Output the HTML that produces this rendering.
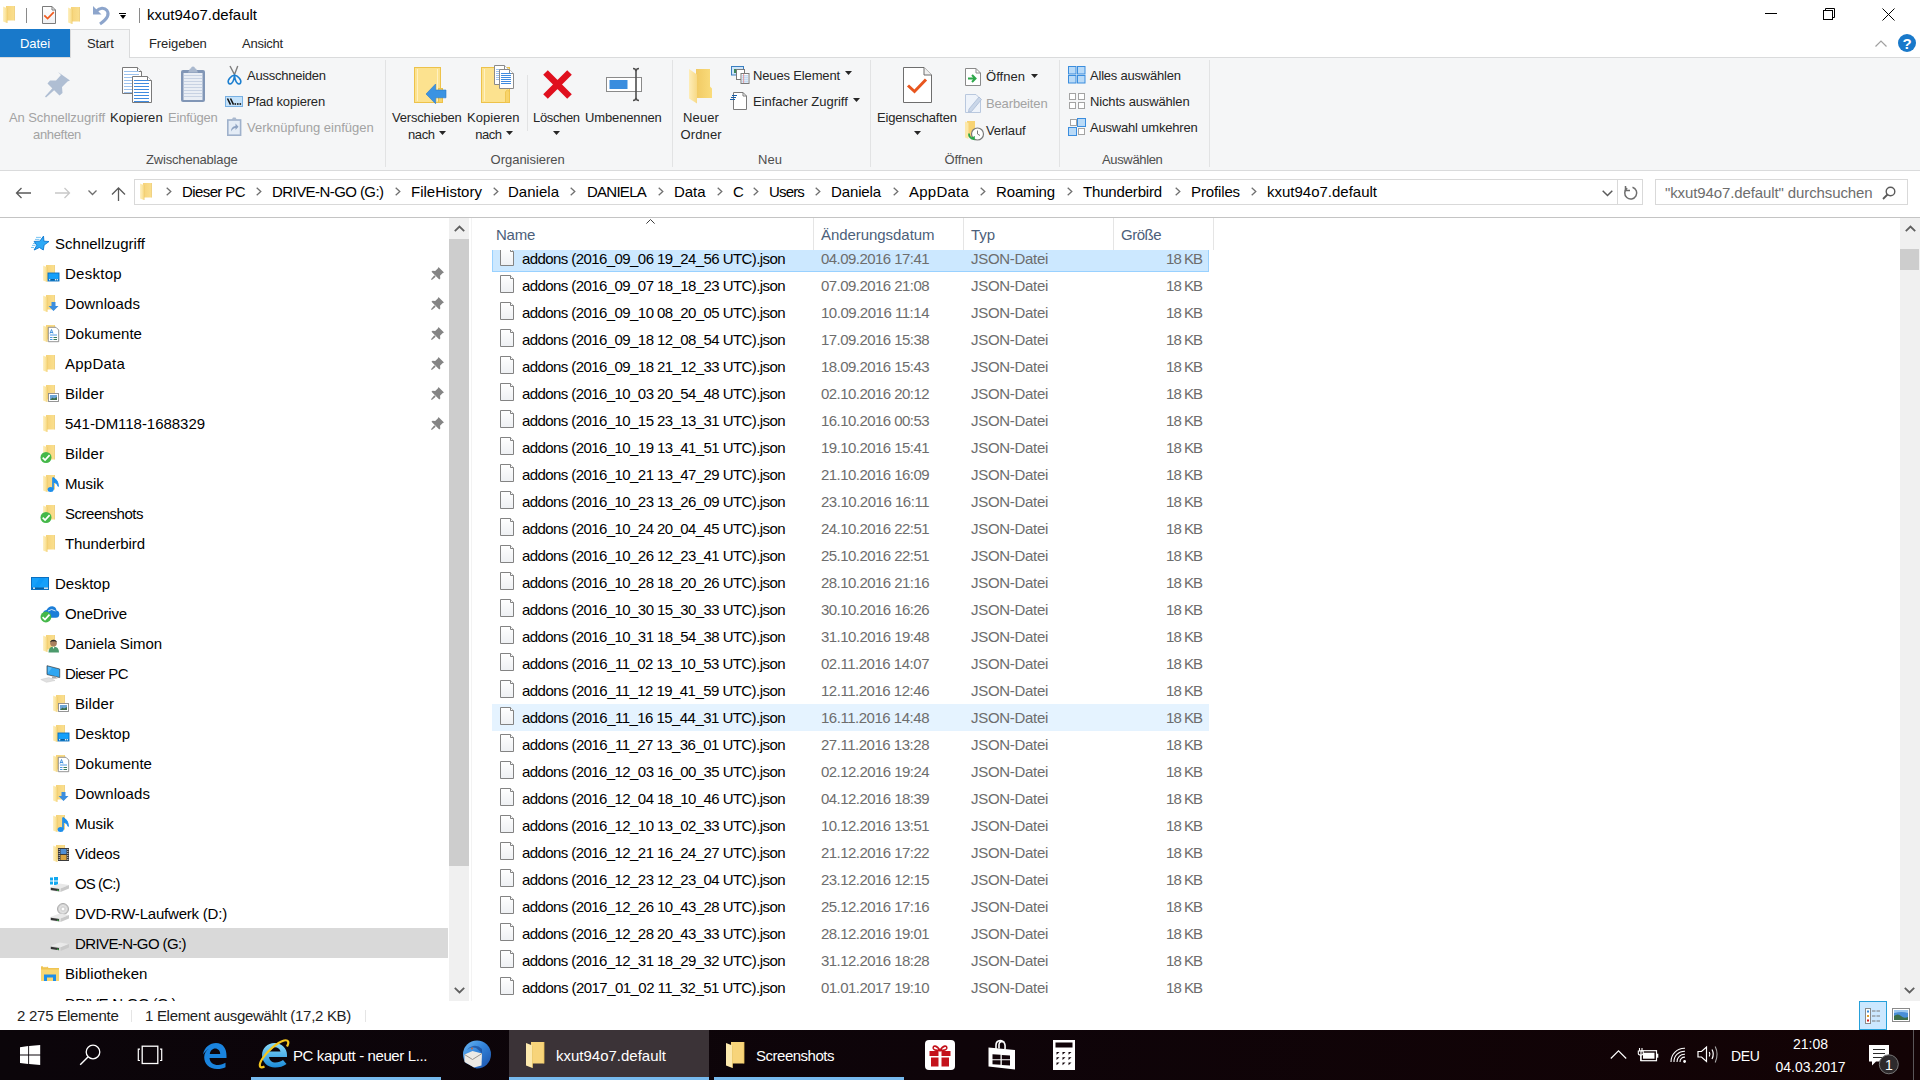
<!DOCTYPE html><html><head><meta charset="utf-8"><style>
html,body{margin:0;padding:0;width:1920px;height:1080px;overflow:hidden;background:#fff;font-family:"Liberation Sans",sans-serif;}
.t{position:absolute;white-space:nowrap;}
.b{position:absolute;}
svg{overflow:visible}
</style></head><body>
<svg width="0" height="0" style="position:absolute"><defs>
<linearGradient id="fold" x1="0" y1="0" x2="1" y2="1"><stop offset="0" stop-color="#FBE39A"/><stop offset="1" stop-color="#F2C75A"/></linearGradient>
<linearGradient id="flap" x1="0" y1="0" x2="1" y2="0"><stop offset="0" stop-color="#FEF0C2"/><stop offset="1" stop-color="#F8DB84"/></linearGradient>
<linearGradient id="fbody" x1="0" y1="0" x2="1" y2="0"><stop offset="0" stop-color="#F6D37A"/><stop offset="1" stop-color="#FADF8E"/></linearGradient>
<linearGradient id="docg" x1="0" y1="0" x2="0" y2="1"><stop offset="0" stop-color="#FFFFFF"/><stop offset="1" stop-color="#EEF0F3"/></linearGradient>
</defs></svg>
<div class="b" style="left:0px;top:0px;width:1920px;height:29px;background:#fff"></div>
<svg class="b" style="left:3px;top:6px;" width="12" height="17" viewBox="0 0 12 17"><g transform="scale(1.0,1.0)"><path d="M3 0H11.5V14.5H3Z" fill="url(#fbody)"/><path d="M11.5 0V14.5" stroke="#E7BE57" stroke-width="0.6"/><path d="M0 0.6L4.2 2.2V17L0 15.4Z" fill="url(#flap)"/><path d="M4.2 2.2V17" stroke="#E9C462" stroke-width="0.5"/></g></svg>
<div class="b" style="left:26px;top:8px;width:1px;height:15px;background:#8A8A8A"></div>
<svg class="b" style="left:42px;top:6px;" width="14" height="18" viewBox="0 0 14 18"><path d="M0.5 0.5H10L13.5 4V17.5H0.5Z" fill="url(#docg)" stroke="#7B7B7B"/><path d="M10 0.5V4H13.5" fill="none" stroke="#7B7B7B"/><path d="M2.3 9.3L5.6 12.5L11.8 6.2" fill="none" stroke="#F05A1E" stroke-width="1.7"/></svg>
<svg class="b" style="left:68px;top:7px;" width="12" height="17" viewBox="0 0 12 17"><g transform="scale(1.0,1.0)"><path d="M3 0H11.5V14.5H3Z" fill="url(#fbody)"/><path d="M11.5 0V14.5" stroke="#E7BE57" stroke-width="0.6"/><path d="M0 0.6L4.2 2.2V17L0 15.4Z" fill="url(#flap)"/><path d="M4.2 2.2V17" stroke="#E9C462" stroke-width="0.5"/></g></svg>
<svg class="b" style="left:93px;top:6px;" width="17" height="19" viewBox="0 0 17 19"><path d="M0 0L0 8.5L8.5 8.5Z" fill="#8DA5CC"/><path d="M3.5 5C6.5 1.5 11.5 1.2 14 4.5C16.5 8 15 12.5 7 18" fill="none" stroke="#8DA5CC" stroke-width="3"/></svg>
<div class="b" style="left:119px;top:13px;width:7px;height:1px;background:#000"></div>
<svg class="b" style="left:120px;top:15px;" width="6" height="4" viewBox="0 0 6 4"><path d="M0 0H6L3 4Z" fill="#000"/></svg>
<div class="b" style="left:139px;top:8px;width:1px;height:15px;background:#8A8A8A"></div>
<div class="t" style="left:147px;top:7.30px;font-size:15px;line-height:15px;color:#000;letter-spacing:-0.006px;">kxut94o7.default</div>
<div class="b" style="left:1765px;top:13px;width:12px;height:1px;background:#000"></div>
<svg class="b" style="left:1823px;top:8px;" width="13" height="13" viewBox="0 0 13 13"><rect x="0.5" y="2.5" width="9" height="9" fill="none" stroke="#000"/><path d="M2.5 2.5V0.5H11.5V9.5H9.5" fill="none" stroke="#000"/></svg>
<svg class="b" style="left:1882px;top:8px;" width="13" height="13" viewBox="0 0 13 13"><path d="M0.5 0.5L12.5 12.5M12.5 0.5L0.5 12.5" stroke="#000" stroke-width="1"/></svg>
<div class="b" style="left:0px;top:29px;width:70px;height:28px;background:#1979CA"></div>
<div class="t" style="left:20px;top:36.50px;font-size:13px;line-height:13px;color:#fff;letter-spacing:-0.072px;">Datei</div>
<div class="b" style="left:70px;top:29px;width:60px;height:29px;background:#F5F6F7;border:1px solid #DADBDC;border-bottom:none;box-sizing:border-box"></div>
<div class="t" style="left:87px;top:36.50px;font-size:13px;line-height:13px;color:#262626;letter-spacing:-0.144px;">Start</div>
<div class="t" style="left:149px;top:36.50px;font-size:13px;line-height:13px;color:#262626;letter-spacing:-0.089px;">Freigeben</div>
<div class="t" style="left:242px;top:36.50px;font-size:13px;line-height:13px;color:#262626;letter-spacing:-0.234px;">Ansicht</div>
<div class="b" style="left:0px;top:57px;width:1920px;height:114px;background:#F5F6F7;border-top:1px solid #DADBDC;border-bottom:1px solid #DADBDC;box-sizing:border-box"></div>
<div class="b" style="left:71px;top:57px;width:58px;height:1px;background:#F5F6F7"></div>
<svg class="b" style="left:1875px;top:40px;" width="12" height="7" viewBox="0 0 12 7"><path d="M0.5 6.5L6 1L11.5 6.5" fill="none" stroke="#A0A0A0" stroke-width="1.2"/></svg>
<svg class="b" style="left:1898px;top:34px;" width="18" height="18" viewBox="0 0 18 18"><circle cx="9" cy="9" r="9" fill="#1979CA"/><text x="9" y="14.5" text-anchor="middle" font-family="Liberation Sans" font-weight="bold" font-size="15" fill="#fff">?</text></svg>
<div class="b" style="left:385px;top:60px;width:1px;height:107px;background:#E2E3E4"></div>
<div class="b" style="left:527px;top:75px;width:1px;height:56px;background:#E2E3E4"></div>
<div class="b" style="left:672px;top:60px;width:1px;height:107px;background:#E2E3E4"></div>
<div class="b" style="left:870px;top:60px;width:1px;height:107px;background:#E2E3E4"></div>
<div class="b" style="left:1059px;top:60px;width:1px;height:107px;background:#E2E3E4"></div>
<div class="b" style="left:1209px;top:60px;width:1px;height:107px;background:#E2E3E4"></div>
<svg class="b" style="left:44px;top:72px;" width="26" height="26" viewBox="0 0 26 26"><g fill="#AFBED3"><path d="M14 0L26 8.5L23.5 9.5L18 15L18.5 21L15.5 23.5L3.5 11.5L6 8.5L12 8.5L17 3Z" transform="translate(0,0)"/><path d="M9.5 15L1 24.5L2 25.5L11.5 17Z"/></g></svg>
<div class="t" style="left:9px;top:110.50px;font-size:13px;line-height:13px;color:#A3A3A3;letter-spacing:-0.078px;">An Schnellzugriff</div>
<div class="t" style="left:33px;top:127.50px;font-size:13px;line-height:13px;color:#A3A3A3;letter-spacing:-0.326px;">anheften</div>
<svg class="b" style="left:122px;top:67px;" width="31" height="36" viewBox="0 0 31 36"><path d="M0.5 0.5H15.5L19.5 4.5V26.5H0.5Z" fill="#fff" stroke="#7A7A7A"/><path d="M15.5 0.5V4.5H19.5" fill="#fff" stroke="#7A7A7A"/><rect x="2" y="4" width="15" height="1" fill="#9CC2EE"/><rect x="2" y="7" width="15" height="1" fill="#9CC2EE"/><rect x="2" y="10" width="15" height="1" fill="#9CC2EE"/><rect x="2" y="13" width="15" height="1" fill="#9CC2EE"/><rect x="2" y="16" width="15" height="1" fill="#9CC2EE"/><rect x="2" y="19" width="15" height="1" fill="#9CC2EE"/><rect x="2" y="22" width="15" height="1" fill="#9CC2EE"/><rect x="2" y="25" width="15" height="1" fill="#9CC2EE"/><path d="M10.5 9.5H25.5L29.5 13.5V35.5H10.5Z" fill="#fff" stroke="#7A7A7A"/><path d="M25.5 9.5V13.5H29.5" fill="#fff" stroke="#7A7A7A"/><rect x="12" y="13" width="15" height="1" fill="#3F8BE0"/><rect x="12" y="16" width="15" height="1" fill="#3F8BE0"/><rect x="12" y="19" width="15" height="1" fill="#3F8BE0"/><rect x="12" y="22" width="15" height="1" fill="#3F8BE0"/><rect x="12" y="25" width="15" height="1" fill="#3F8BE0"/><rect x="12" y="28" width="15" height="1" fill="#3F8BE0"/><rect x="12" y="31" width="15" height="1" fill="#3F8BE0"/><rect x="12" y="34" width="15" height="1" fill="#3F8BE0"/></svg>
<div class="t" style="left:110px;top:110.50px;font-size:13px;line-height:13px;color:#262626;letter-spacing:0.082px;">Kopieren</div>
<svg class="b" style="left:180px;top:66px;" width="26" height="37" viewBox="0 0 26 37"><rect x="1" y="4" width="24" height="32" rx="2" fill="#8196B6"/><rect x="3.5" y="7" width="19" height="27" fill="#E9EEF5"/><rect x="4" y="9" width="18" height="1" fill="#C7D2E3"/><rect x="4" y="12" width="18" height="1" fill="#C7D2E3"/><rect x="4" y="15" width="18" height="1" fill="#C7D2E3"/><rect x="4" y="18" width="18" height="1" fill="#C7D2E3"/><rect x="4" y="21" width="18" height="1" fill="#C7D2E3"/><rect x="4" y="24" width="18" height="1" fill="#C7D2E3"/><rect x="4" y="27" width="18" height="1" fill="#C7D2E3"/><rect x="4" y="30" width="18" height="1" fill="#C7D2E3"/><path d="M8 6.5L10 2.5H16L18 6.5Z" fill="#A9B8CE"/><circle cx="13" cy="2.5" r="2" fill="#A9B8CE"/></svg>
<div class="t" style="left:168px;top:110.50px;font-size:13px;line-height:13px;color:#A3A3A3;letter-spacing:-0.216px;">Einfügen</div>
<svg class="b" style="left:226px;top:66px;" width="17" height="19" viewBox="0 0 17 19"><path d="M4 0L8.5 8.5L11.75 0" fill="none" stroke="#7E7E7E" stroke-width="1.4"/><path d="M8.5 9C5 10 1 14 2.5 17C4 19.5 8 17 8.5 9Z M8.5 9C12 10 16 14 14.5 17C13 19.5 9 17 8.5 9Z" fill="none" stroke="#1C7FD0" stroke-width="1.6"/></svg>
<div class="t" style="left:247px;top:69.00px;font-size:13px;line-height:13px;color:#262626;letter-spacing:-0.243px;">Ausschneiden</div>
<svg class="b" style="left:225px;top:96px;" width="18" height="11" viewBox="0 0 18 11"><rect x="0.5" y="0.5" width="17" height="10" fill="#C4E2FA" stroke="#78B0E2"/><path d="M2.5 2.5L5.5 8.7M5.5 2.5L8.5 8.7" stroke="#111" stroke-width="1.5"/><rect x="9.5" y="7.2" width="1.6" height="1.6" fill="#111"/><rect x="12" y="7.2" width="1.6" height="1.6" fill="#111"/><rect x="14.5" y="7.2" width="1.6" height="1.6" fill="#111"/></svg>
<div class="t" style="left:247px;top:95.00px;font-size:13px;line-height:13px;color:#262626;letter-spacing:-0.172px;">Pfad kopieren</div>
<svg class="b" style="left:227px;top:117px;" width="15" height="19" viewBox="0 0 15 19"><rect x="0.8" y="3" width="12.8" height="15.2" fill="#E4ECF6" stroke="#9FB1CB" stroke-width="1.6"/><path d="M4.5 3L6 0.5H8.5L10 3Z" fill="#A9B8CE"/><path d="M4 14.5Q4 9.5 8.5 9V6.5L11.5 9.8L8.5 13V11Q6 11 4 14.5Z" fill="#8DA2C2"/></svg>
<div class="t" style="left:247px;top:120.50px;font-size:13px;line-height:13px;color:#A3A3A3;letter-spacing:0.013px;">Verknüpfung einfügen</div>
<div class="t" style="left:146px;top:153.00px;font-size:13px;line-height:13px;color:#4E4E4E;letter-spacing:-0.175px;">Zwischenablage</div>
<svg class="b" style="left:414px;top:67px;" width="33" height="37" viewBox="0 0 33 37"><rect x="0.5" y="0.5" width="26" height="35" fill="#FCE28F" stroke="#EDC24A"/><path d="M3.5 2V34M23.5 2V34" stroke="#FFF1C2" stroke-width="1"/><rect x="24.5" y="21.5" width="4" height="14" fill="#F8D46A" stroke="#EDC24A"/><path d="M12 27L21.6 17V23H32V30.8H21.6V36.75Z" fill="#3B93E2" stroke="#2A78C8" stroke-width="0.6"/></svg>
<div class="t" style="left:392px;top:111.00px;font-size:13px;line-height:13px;color:#262626;letter-spacing:-0.178px;">Verschieben</div>
<div class="t" style="left:408px;top:127.50px;font-size:13px;line-height:13px;color:#262626;letter-spacing:-0.376px;">nach</div>
<svg class="b" style="left:439px;top:131px;" width="7" height="4" viewBox="0 0 7 4"><path d="M0 0H7L3.5 4Z" fill="#262626"/></svg>
<svg class="b" style="left:481px;top:65px;" width="34" height="39" viewBox="0 0 34 39"><rect x="0.5" y="2.5" width="28" height="35" fill="#FCE28F" stroke="#EDC24A"/><path d="M3.5 4V36" stroke="#FFF1C2" stroke-width="1"/><path d="M24.5 37.5V27Q26.5 23 28.5 27V37.5Z" fill="#F8D46A" stroke="#EDC24A" stroke-width="0.8"/><path d="M13.5 0.5H23.5L27.5 4.5V19.5H13.5Z" fill="#fff" stroke="#8A8A8A"/><path d="M23.5 0.5V4.5H27.5" fill="#fff" stroke="#8A8A8A"/><rect x="15" y="4" width="10" height="1" fill="#9CC2EE"/><rect x="15" y="6" width="10" height="1" fill="#9CC2EE"/><rect x="15" y="8" width="10" height="1" fill="#9CC2EE"/><rect x="15" y="10" width="10" height="1" fill="#9CC2EE"/><rect x="15" y="12" width="10" height="1" fill="#9CC2EE"/><rect x="15" y="14" width="10" height="1" fill="#9CC2EE"/><path d="M18.5 4.5H28.5L32.5 8.5V23.5H18.5Z" fill="#fff" stroke="#8A8A8A"/><path d="M28.5 4.5V8.5H32.5" fill="#fff" stroke="#8A8A8A"/><rect x="20" y="8" width="10" height="1" fill="#3F8BE0"/><rect x="20" y="10" width="10" height="1" fill="#3F8BE0"/><rect x="20" y="12" width="10" height="1" fill="#3F8BE0"/><rect x="20" y="14" width="10" height="1" fill="#3F8BE0"/><rect x="20" y="16" width="10" height="1" fill="#3F8BE0"/><rect x="20" y="18" width="10" height="1" fill="#3F8BE0"/></svg>
<div class="t" style="left:467px;top:111.00px;font-size:13px;line-height:13px;color:#262626;letter-spacing:0.057px;">Kopieren</div>
<div class="t" style="left:475.3px;top:127.50px;font-size:13px;line-height:13px;color:#262626;letter-spacing:-0.476px;">nach</div>
<svg class="b" style="left:506px;top:131px;" width="7" height="4" viewBox="0 0 7 4"><path d="M0 0H7L3.5 4Z" fill="#262626"/></svg>
<svg class="b" style="left:542px;top:69px;" width="31" height="31" viewBox="0 0 31 31"><path d="M3.5 3.5L27.5 27.5M27.5 3.5L3.5 27.5" stroke="#E0101E" stroke-width="6.5"/></svg>
<div class="t" style="left:533px;top:111.00px;font-size:13px;line-height:13px;color:#262626;letter-spacing:-0.351px;">Löschen</div>
<svg class="b" style="left:553px;top:131px;" width="7" height="4" viewBox="0 0 7 4"><path d="M0 0H7L3.5 4Z" fill="#262626"/></svg>
<svg class="b" style="left:606px;top:68px;" width="37" height="34" viewBox="0 0 37 34"><rect x="0.5" y="9.5" width="35" height="14" fill="#fff" stroke="#8A8A8A"/><rect x="3.5" y="12" width="18" height="9" fill="#3A8DDE"/><path d="M27 0.5Q30 0.5 30 3.5V29.5Q30 32.5 27 32.5M33 0.5Q30 0.5 30 3.5M33 32.5Q30 32.5 30 29.5" fill="none" stroke="#4F4F4F" stroke-width="1.6"/></svg>
<div class="t" style="left:585px;top:111.00px;font-size:13px;line-height:13px;color:#262626;letter-spacing:-0.136px;">Umbenennen</div>
<div class="t" style="left:490.6px;top:153.00px;font-size:13px;line-height:13px;color:#4E4E4E;letter-spacing:-0.020px;">Organisieren</div>
<svg class="b" style="left:689px;top:69px;" width="24" height="35" viewBox="0 0 24 35"><defs><linearGradient id="nob" x1="0" y1="0" x2="1" y2="0"><stop offset="0" stop-color="#EDC259"/><stop offset="1" stop-color="#FADC7C"/></linearGradient><linearGradient id="nof" x1="0" y1="0" x2="1" y2="0"><stop offset="0" stop-color="#FEEDB8"/><stop offset="1" stop-color="#F7D986"/></linearGradient></defs><path d="M0 0H21V17.5L23 19.5V29H7V0Z" fill="url(#nob)"/><path d="M0 0L8 5.5V34.5L0 29.5Z" fill="url(#nof)"/></svg>
<div class="t" style="left:683px;top:110.70px;font-size:13px;line-height:13px;color:#262626;letter-spacing:0.116px;">Neuer</div>
<div class="t" style="left:680.5px;top:127.50px;font-size:13px;line-height:13px;color:#262626;letter-spacing:0.122px;">Ordner</div>
<svg class="b" style="left:731px;top:66px;" width="19" height="19" viewBox="0 0 19 19"><rect x="0.5" y="0.5" width="12" height="8.5" fill="#CFE6FA" stroke="#3A7EC0"/><rect x="3" y="3" width="2" height="4" fill="#3C8A5A"/><rect x="5.5" y="3.5" width="8" height="10" fill="#fff" stroke="#7A7A7A"/><rect x="10" y="7.5" width="8" height="10" fill="#fff" stroke="#7A7A7A"/><rect x="11" y="9.5" width="6" height="0.8" fill="#8AB8E8"/><rect x="11" y="11.5" width="6" height="0.8" fill="#8AB8E8"/><rect x="11" y="13.5" width="6" height="0.8" fill="#8AB8E8"/><rect x="11" y="15.5" width="6" height="0.8" fill="#8AB8E8"/><rect x="12.3" y="8" width="0.8" height="9" fill="#E88A8A"/></svg>
<div class="t" style="left:753px;top:68.70px;font-size:13px;line-height:13px;color:#262626;letter-spacing:-0.145px;">Neues Element</div>
<svg class="b" style="left:845px;top:71px;" width="7" height="4" viewBox="0 0 7 4"><path d="M0 0H7L3.5 4Z" fill="#262626"/></svg>
<svg class="b" style="left:730px;top:91px;" width="18" height="20" viewBox="0 0 18 20"><path d="M3.5 1.5H13L16.5 5V18.5H3.5Z" fill="#fff" stroke="#7A7A7A"/><path d="M13 1.5V5H16.5" fill="none" stroke="#7A7A7A"/><path d="M2 4.5H7M1 6.5H6M0 8.5H5" stroke="#1A5FA8" stroke-width="1"/></svg>
<div class="t" style="left:753px;top:95.00px;font-size:13px;line-height:13px;color:#262626;letter-spacing:-0.020px;">Einfacher Zugriff</div>
<svg class="b" style="left:853px;top:98px;" width="7" height="4" viewBox="0 0 7 4"><path d="M0 0H7L3.5 4Z" fill="#262626"/></svg>
<div class="t" style="left:758px;top:153.00px;font-size:13px;line-height:13px;color:#4E4E4E;letter-spacing:0.047px;">Neu</div>
<svg class="b" style="left:903px;top:67px;" width="29" height="37" viewBox="0 0 29 37"><path d="M0.5 0.5H21L28.5 8V35.5H0.5Z" fill="#fff" stroke="#6E6E6E"/><path d="M21 0.5V8H28.5" fill="#F0F0F0" stroke="#6E6E6E"/><path d="M5 18.5L11.5 24.5L23 12.5" fill="none" stroke="#E8561F" stroke-width="3"/></svg>
<div class="t" style="left:877px;top:111.00px;font-size:13px;line-height:13px;color:#262626;letter-spacing:-0.204px;">Eigenschaften</div>
<svg class="b" style="left:914px;top:131px;" width="7" height="4" viewBox="0 0 7 4"><path d="M0 0H7L3.5 4Z" fill="#262626"/></svg>
<svg class="b" style="left:965px;top:68px;" width="16" height="18" viewBox="0 0 16 18"><path d="M0.5 0.5H11L15.5 5V17.5H0.5Z" fill="#fff" stroke="#8A8A8A"/><path d="M11 0.5V5H15.5" fill="none" stroke="#8A8A8A"/><path d="M3 10.5H10M7 7L10.5 10.5L7 14" fill="none" stroke="#2DA84A" stroke-width="2"/></svg>
<div class="t" style="left:986px;top:69.50px;font-size:13px;line-height:13px;color:#262626;letter-spacing:0.034px;">Öffnen</div>
<svg class="b" style="left:1031px;top:74px;" width="7" height="4" viewBox="0 0 7 4"><path d="M0 0H7L3.5 4Z" fill="#262626"/></svg>
<svg class="b" style="left:965px;top:94px;" width="18" height="19" viewBox="0 0 18 19"><path d="M0.5 0.5H11L15.5 5V18.5H0.5Z" fill="#EEF3FA" stroke="#B9C8DE"/><path d="M4 15L14 3L16.5 5.5L6.5 17.5L3.5 18Z" fill="#C9D6E8" stroke="#A9BBD6" stroke-width="0.8"/></svg>
<div class="t" style="left:986px;top:97.00px;font-size:13px;line-height:13px;color:#A3A3A3;letter-spacing:-0.139px;">Bearbeiten</div>
<svg class="b" style="left:965px;top:121px;" width="19" height="20" viewBox="0 0 19 20"><path d="M2 0H10V16H2Z" fill="#F7D373"/><path d="M0 0.5L3.5 2V18L0 16.5Z" fill="#FCE8A8"/><circle cx="12.5" cy="13" r="6" fill="#fff" stroke="#7A7A7A" stroke-width="1.2"/><path d="M12.5 9.5V13L15 14.5" stroke="#7A7A7A" fill="none"/><path d="M4 12.5A5 5 0 0 0 9 18" fill="none" stroke="#2DA84A" stroke-width="1.8"/><path d="M6.5 16.5L9.5 19.5L10 15" fill="#2DA84A"/></svg>
<div class="t" style="left:986px;top:124.00px;font-size:13px;line-height:13px;color:#262626;letter-spacing:-0.141px;">Verlauf</div>
<div class="t" style="left:944.5px;top:153.00px;font-size:13px;line-height:13px;color:#4E4E4E;letter-spacing:-0.133px;">Öffnen</div>
<svg class="b" style="left:1068px;top:66px;" width="18" height="18" viewBox="0 0 18 18"><rect x="0.5" y="0.5" width="7.5" height="7.5" fill="#B9DAF7" stroke="#3A8DDE"/><rect x="9.5" y="0.5" width="7.5" height="7.5" fill="#B9DAF7" stroke="#3A8DDE"/><rect x="0.5" y="9.5" width="7.5" height="7.5" fill="#B9DAF7" stroke="#3A8DDE"/><rect x="9.5" y="9.5" width="7.5" height="7.5" fill="#B9DAF7" stroke="#3A8DDE"/></svg>
<div class="t" style="left:1090px;top:69.00px;font-size:13px;line-height:13px;color:#262626;letter-spacing:-0.214px;">Alles auswählen</div>
<svg class="b" style="left:1068px;top:92px;" width="18" height="18" viewBox="0 0 18 18"><g fill="#fff" stroke="#A3A3A3"><rect x="1.5" y="1.5" width="6" height="6"/><rect x="10.5" y="1.5" width="6" height="6"/><rect x="1.5" y="10.5" width="6" height="6"/><rect x="10.5" y="10.5" width="6" height="6"/></g></svg>
<div class="t" style="left:1090px;top:95.00px;font-size:13px;line-height:13px;color:#262626;letter-spacing:-0.149px;">Nichts auswählen</div>
<svg class="b" style="left:1068px;top:118px;" width="18" height="18" viewBox="0 0 18 18"><g fill="#fff" stroke="#A3A3A3"><rect x="2.5" y="1.5" width="6" height="6"/><rect x="10.5" y="10.5" width="6" height="6"/></g><g fill="#B9DAF7" stroke="#3A8DDE"><rect x="9.5" y="0.5" width="8" height="8"/><rect x="0.5" y="9.5" width="8" height="8"/></g></svg>
<div class="t" style="left:1090px;top:121.00px;font-size:13px;line-height:13px;color:#262626;letter-spacing:-0.191px;">Auswahl umkehren</div>
<div class="t" style="left:1102px;top:153.00px;font-size:13px;line-height:13px;color:#4E4E4E;letter-spacing:-0.345px;">Auswählen</div>
<div class="b" style="left:0px;top:171px;width:1920px;height:46px;background:#fff"></div>
<div class="b" style="left:0px;top:217px;width:1920px;height:1px;background:#C4C4C4"></div>
<div class="b" style="left:134px;top:179px;width:1509px;height:26px;border:1px solid #D9D9D9;box-sizing:border-box;background:#fff"></div>
<div class="b" style="left:1617px;top:180px;width:1px;height:24px;background:#D9D9D9"></div>
<div class="b" style="left:1655px;top:179px;width:253px;height:26px;border:1px solid #D9D9D9;box-sizing:border-box;background:#fff"></div>
<div class="t" style="left:1665px;top:184.80px;font-size:15px;line-height:15px;color:#6D6D6D;letter-spacing:-0.110px;">"kxut94o7.default" durchsuchen</div>
<svg class="b" style="left:1882px;top:186px;" width="14" height="14" viewBox="0 0 14 14"><circle cx="8.5" cy="5.5" r="4.3" fill="none" stroke="#5A5A5A" stroke-width="1.4"/><path d="M5.5 8.5L1 13" stroke="#5A5A5A" stroke-width="1.8"/></svg>
<svg class="b" style="left:1623px;top:185px;" width="16" height="16" viewBox="0 0 16 16"><path d="M4.2 3.2A6 6 0 1 0 9.5 2.3" fill="none" stroke="#6E6E6E" stroke-width="1.5"/><path d="M2.5 1V5.5H7" fill="none" stroke="#6E6E6E" stroke-width="1.5"/></svg>
<svg class="b" style="left:1602px;top:190px;" width="11" height="7" viewBox="0 0 11 7"><path d="M0.7 0.7L5.5 5.5L10.3 0.7" fill="none" stroke="#5A5A5A" stroke-width="1.5"/></svg>
<svg class="b" style="left:15px;top:187px;" width="17" height="12" viewBox="0 0 17 12"><path d="M16 6H1.5M6.5 1L1.5 6L6.5 11" fill="none" stroke="#5A5A5A" stroke-width="1.3"/></svg>
<svg class="b" style="left:54px;top:187px;" width="17" height="12" viewBox="0 0 17 12"><path d="M1 6H15.5M10.5 1L15.5 6L10.5 11" fill="none" stroke="#C8C8C8" stroke-width="1.3"/></svg>
<svg class="b" style="left:88px;top:190px;" width="9" height="6" viewBox="0 0 9 6"><path d="M0.5 0.5L4.5 4.5L8.5 0.5" fill="none" stroke="#6E6E6E" stroke-width="1.3"/></svg>
<svg class="b" style="left:111px;top:187px;" width="15" height="14" viewBox="0 0 15 14"><path d="M7.5 14V1.5M1 7.5L7.5 1L14 7.5" fill="none" stroke="#5A5A5A" stroke-width="1.3"/></svg>
<svg class="b" style="left:140px;top:183px;" width="12" height="17" viewBox="0 0 12 17"><g transform="scale(1.0,1.0)"><path d="M3 0H11.5V14.5H3Z" fill="url(#fbody)"/><path d="M11.5 0V14.5" stroke="#E7BE57" stroke-width="0.6"/><path d="M0 0.6L4.2 2.2V17L0 15.4Z" fill="url(#flap)"/><path d="M4.2 2.2V17" stroke="#E9C462" stroke-width="0.5"/></g></svg>
<svg class="b" style="left:166px;top:187px;" width="6" height="9" viewBox="0 0 6 9"><path d="M0.7 0.7L4.8 4.5L0.7 8.3" fill="none" stroke="#707070" stroke-width="1.3"/></svg>
<svg class="b" style="left:256px;top:187px;" width="6" height="9" viewBox="0 0 6 9"><path d="M0.7 0.7L4.8 4.5L0.7 8.3" fill="none" stroke="#707070" stroke-width="1.3"/></svg>
<svg class="b" style="left:394.5px;top:187px;" width="6" height="9" viewBox="0 0 6 9"><path d="M0.7 0.7L4.8 4.5L0.7 8.3" fill="none" stroke="#707070" stroke-width="1.3"/></svg>
<svg class="b" style="left:492.5px;top:187px;" width="6" height="9" viewBox="0 0 6 9"><path d="M0.7 0.7L4.8 4.5L0.7 8.3" fill="none" stroke="#707070" stroke-width="1.3"/></svg>
<svg class="b" style="left:570px;top:187px;" width="6" height="9" viewBox="0 0 6 9"><path d="M0.7 0.7L4.8 4.5L0.7 8.3" fill="none" stroke="#707070" stroke-width="1.3"/></svg>
<svg class="b" style="left:658px;top:187px;" width="6" height="9" viewBox="0 0 6 9"><path d="M0.7 0.7L4.8 4.5L0.7 8.3" fill="none" stroke="#707070" stroke-width="1.3"/></svg>
<svg class="b" style="left:717px;top:187px;" width="6" height="9" viewBox="0 0 6 9"><path d="M0.7 0.7L4.8 4.5L0.7 8.3" fill="none" stroke="#707070" stroke-width="1.3"/></svg>
<svg class="b" style="left:753px;top:187px;" width="6" height="9" viewBox="0 0 6 9"><path d="M0.7 0.7L4.8 4.5L0.7 8.3" fill="none" stroke="#707070" stroke-width="1.3"/></svg>
<svg class="b" style="left:815px;top:187px;" width="6" height="9" viewBox="0 0 6 9"><path d="M0.7 0.7L4.8 4.5L0.7 8.3" fill="none" stroke="#707070" stroke-width="1.3"/></svg>
<svg class="b" style="left:893px;top:187px;" width="6" height="9" viewBox="0 0 6 9"><path d="M0.7 0.7L4.8 4.5L0.7 8.3" fill="none" stroke="#707070" stroke-width="1.3"/></svg>
<svg class="b" style="left:980px;top:187px;" width="6" height="9" viewBox="0 0 6 9"><path d="M0.7 0.7L4.8 4.5L0.7 8.3" fill="none" stroke="#707070" stroke-width="1.3"/></svg>
<svg class="b" style="left:1067px;top:187px;" width="6" height="9" viewBox="0 0 6 9"><path d="M0.7 0.7L4.8 4.5L0.7 8.3" fill="none" stroke="#707070" stroke-width="1.3"/></svg>
<svg class="b" style="left:1175px;top:187px;" width="6" height="9" viewBox="0 0 6 9"><path d="M0.7 0.7L4.8 4.5L0.7 8.3" fill="none" stroke="#707070" stroke-width="1.3"/></svg>
<svg class="b" style="left:1251px;top:187px;" width="6" height="9" viewBox="0 0 6 9"><path d="M0.7 0.7L4.8 4.5L0.7 8.3" fill="none" stroke="#707070" stroke-width="1.3"/></svg>
<div class="t" style="left:182px;top:184.30px;font-size:15px;line-height:15px;color:#000;letter-spacing:-0.595px;">Dieser PC</div>
<div class="t" style="left:272px;top:184.30px;font-size:15px;line-height:15px;color:#000;letter-spacing:-0.567px;">DRIVE-N-GO (G:)</div>
<div class="t" style="left:411px;top:184.30px;font-size:15px;line-height:15px;color:#000;letter-spacing:0.014px;">FileHistory</div>
<div class="t" style="left:508px;top:184.30px;font-size:15px;line-height:15px;color:#000;letter-spacing:0.018px;">Daniela</div>
<div class="t" style="left:587px;top:184.30px;font-size:15px;line-height:15px;color:#000;letter-spacing:-0.743px;">DANIELA</div>
<div class="t" style="left:674px;top:184.30px;font-size:15px;line-height:15px;color:#000;letter-spacing:-0.047px;">Data</div>
<div class="t" style="left:733px;top:184.30px;font-size:15px;line-height:15px;color:#000;letter-spacing:-1.844px;">C</div>
<div class="t" style="left:769px;top:184.30px;font-size:15px;line-height:15px;color:#000;letter-spacing:-0.834px;">Users</div>
<div class="t" style="left:831px;top:184.30px;font-size:15px;line-height:15px;color:#000;letter-spacing:-0.125px;">Daniela</div>
<div class="t" style="left:909px;top:184.30px;font-size:15px;line-height:15px;color:#000;letter-spacing:0.232px;">AppData</div>
<div class="t" style="left:996px;top:184.30px;font-size:15px;line-height:15px;color:#000;letter-spacing:-0.147px;">Roaming</div>
<div class="t" style="left:1083px;top:184.30px;font-size:15px;line-height:15px;color:#000;letter-spacing:-0.172px;">Thunderbird</div>
<div class="t" style="left:1191px;top:184.30px;font-size:15px;line-height:15px;color:#000;letter-spacing:-0.129px;">Profiles</div>
<div class="t" style="left:1267px;top:184.30px;font-size:15px;line-height:15px;color:#000;letter-spacing:-0.006px;">kxut94o7.default</div>
<div class="b" style="left:0px;top:218px;width:472px;height:783px;background:#fff"></div>
<div class="b" style="left:471px;top:218px;width:1px;height:783px;background:#F3F3F3"></div>
<div class="b" style="left:449px;top:218px;width:20px;height:783px;background:#F0F0F0"></div>
<div class="b" style="left:449px;top:239px;width:20px;height:627px;background:#CDCDCD"></div>
<svg class="b" style="left:454px;top:225px;" width="11" height="7" viewBox="0 0 11 7"><path d="M0.8 6.2L5.5 1.5L10.2 6.2" fill="none" stroke="#606060" stroke-width="1.8"/></svg>
<svg class="b" style="left:454px;top:987px;" width="11" height="7" viewBox="0 0 11 7"><path d="M0.8 0.8L5.5 5.5L10.2 0.8" fill="none" stroke="#606060" stroke-width="1.8"/></svg>
<div class="b" style="left:0px;top:928px;width:448px;height:30px;background:#D9D9D9"></div>
<div class="t" style="left:55px;top:236.05px;font-size:15px;line-height:15px;color:#000;letter-spacing:0.016px;">Schnellzugriff</div>
<svg class="b" style="left:28px;top:232px;" width="24" height="22" viewBox="0 0 24 22"><path d="M15.5 4.1L15.9 9.2L21 9.5L16.1 13.1L15.3 18L11.4 15.5L6.1 18L8.8 13.3L6.1 9.4L11.8 9.2Z" fill="#2DA9F6" stroke="#0B76CF" stroke-width="0.9" stroke-linejoin="round"/><path d="M8 5.4H13M7 7.4H11.5M5 11.5H7M4 13.4H7.5M3 15.5H6" stroke="#6BBDF0" stroke-width="0.9"/></svg>
<div class="t" style="left:65px;top:266.05px;font-size:15px;line-height:15px;color:#000;letter-spacing:0.281px;">Desktop</div>
<svg class="b" style="left:431px;top:267px;" width="13" height="13" viewBox="0 0 13 13"><g fill="#848484"><path d="M7.5 0L13 5.5L11.8 6L9 8.8L9.3 11.5L8.3 12.5L0.5 4.7L1.5 3.7L4.2 4L7 1.2Z"/><path d="M3.3 8.3L0 12.2L0.8 13L4.7 9.7Z"/></g></svg>
<svg class="b" style="left:43px;top:265px;" width="17" height="18" viewBox="0 0 17 18"><g transform="scale(1.0,1.0)"><path d="M3 0H11.5V14.5H3Z" fill="url(#fbody)"/><path d="M11.5 0V14.5" stroke="#E7BE57" stroke-width="0.6"/><path d="M0 0.6L4.2 2.2V17L0 15.4Z" fill="url(#flap)"/><path d="M4.2 2.2V17" stroke="#E9C462" stroke-width="0.5"/></g><rect x="5" y="8" width="11" height="8" fill="#16A0FA" stroke="#0A6FC0" stroke-width="0.9"/><rect x="5.5" y="14" width="10" height="1.5" fill="#0A5E9E"/><circle cx="6.7" cy="14.8" r="0.7" fill="#fff"/><circle cx="12.5" cy="14.8" r="0.7" fill="#fff"/><circle cx="14.3" cy="14.8" r="0.7" fill="#fff"/></svg>
<div class="t" style="left:65px;top:296.05px;font-size:15px;line-height:15px;color:#000;letter-spacing:0.087px;">Downloads</div>
<svg class="b" style="left:431px;top:297px;" width="13" height="13" viewBox="0 0 13 13"><g fill="#848484"><path d="M7.5 0L13 5.5L11.8 6L9 8.8L9.3 11.5L8.3 12.5L0.5 4.7L1.5 3.7L4.2 4L7 1.2Z"/><path d="M3.3 8.3L0 12.2L0.8 13L4.7 9.7Z"/></g></svg>
<svg class="b" style="left:43px;top:295px;" width="17" height="18" viewBox="0 0 17 18"><g transform="scale(1.0,1.0)"><path d="M3 0H11.5V14.5H3Z" fill="url(#fbody)"/><path d="M11.5 0V14.5" stroke="#E7BE57" stroke-width="0.6"/><path d="M0 0.6L4.2 2.2V17L0 15.4Z" fill="url(#flap)"/><path d="M4.2 2.2V17" stroke="#E9C462" stroke-width="0.5"/></g><path d="M8.5 7H12.5V11H15.5L10.5 16L5.5 11H8.5Z" fill="#3A8DDE"/></svg>
<div class="t" style="left:65px;top:326.05px;font-size:15px;line-height:15px;color:#000;letter-spacing:0.031px;">Dokumente</div>
<svg class="b" style="left:431px;top:327px;" width="13" height="13" viewBox="0 0 13 13"><g fill="#848484"><path d="M7.5 0L13 5.5L11.8 6L9 8.8L9.3 11.5L8.3 12.5L0.5 4.7L1.5 3.7L4.2 4L7 1.2Z"/><path d="M3.3 8.3L0 12.2L0.8 13L4.7 9.7Z"/></g></svg>
<svg class="b" style="left:43px;top:325px;" width="17" height="18" viewBox="0 0 17 18"><g transform="scale(1.0,1.0)"><path d="M3 0H11.5V14.5H3Z" fill="url(#fbody)"/><path d="M11.5 0V14.5" stroke="#E7BE57" stroke-width="0.6"/><path d="M0 0.6L4.2 2.2V17L0 15.4Z" fill="url(#flap)"/><path d="M4.2 2.2V17" stroke="#E9C462" stroke-width="0.5"/></g><path d="M5.3 2.3H13L15.7 5V16.7H5.3Z" fill="#fff" stroke="#7A7A7A" stroke-width="0.8"/><path d="M8.5 4.5L7 8.5M8.5 4.5L10 8.5M7 7.5H10M7 10H14M7 12.5H9.5M7 14.5H9.5" stroke="#3A8DDE" stroke-width="0.9" fill="none"/><path d="M10.5 12.5H14M10.5 14.5H14" stroke="#3C7A5A" stroke-width="1"/></svg>
<div class="t" style="left:65px;top:356.05px;font-size:15px;line-height:15px;color:#000;letter-spacing:0.232px;">AppData</div>
<svg class="b" style="left:431px;top:357px;" width="13" height="13" viewBox="0 0 13 13"><g fill="#848484"><path d="M7.5 0L13 5.5L11.8 6L9 8.8L9.3 11.5L8.3 12.5L0.5 4.7L1.5 3.7L4.2 4L7 1.2Z"/><path d="M3.3 8.3L0 12.2L0.8 13L4.7 9.7Z"/></g></svg>
<svg class="b" style="left:43px;top:355px;" width="17" height="18" viewBox="0 0 17 18"><g transform="scale(1.0,1.0)"><path d="M3 0H11.5V14.5H3Z" fill="url(#fbody)"/><path d="M11.5 0V14.5" stroke="#E7BE57" stroke-width="0.6"/><path d="M0 0.6L4.2 2.2V17L0 15.4Z" fill="url(#flap)"/><path d="M4.2 2.2V17" stroke="#E9C462" stroke-width="0.5"/></g></svg>
<div class="t" style="left:65px;top:386.05px;font-size:15px;line-height:15px;color:#000;letter-spacing:0.107px;">Bilder</div>
<svg class="b" style="left:431px;top:387px;" width="13" height="13" viewBox="0 0 13 13"><g fill="#848484"><path d="M7.5 0L13 5.5L11.8 6L9 8.8L9.3 11.5L8.3 12.5L0.5 4.7L1.5 3.7L4.2 4L7 1.2Z"/><path d="M3.3 8.3L0 12.2L0.8 13L4.7 9.7Z"/></g></svg>
<svg class="b" style="left:43px;top:385px;" width="17" height="18" viewBox="0 0 17 18"><g transform="scale(1.0,1.0)"><path d="M3 0H11.5V14.5H3Z" fill="url(#fbody)"/><path d="M11.5 0V14.5" stroke="#E7BE57" stroke-width="0.6"/><path d="M0 0.6L4.2 2.2V17L0 15.4Z" fill="url(#flap)"/><path d="M4.2 2.2V17" stroke="#E9C462" stroke-width="0.5"/></g><rect x="5.5" y="8.5" width="10" height="8" fill="#fff" stroke="#8A8A8A" stroke-width="0.9"/><rect x="7" y="10" width="7" height="5" fill="#6DA6D8"/><path d="M7 15L9.5 12.5L11 13.5L14 12V15Z" fill="#3E6E4E"/></svg>
<div class="t" style="left:65px;top:416.05px;font-size:15px;line-height:15px;color:#000;letter-spacing:-0.039px;">541-DM118-1688329</div>
<svg class="b" style="left:431px;top:417px;" width="13" height="13" viewBox="0 0 13 13"><g fill="#848484"><path d="M7.5 0L13 5.5L11.8 6L9 8.8L9.3 11.5L8.3 12.5L0.5 4.7L1.5 3.7L4.2 4L7 1.2Z"/><path d="M3.3 8.3L0 12.2L0.8 13L4.7 9.7Z"/></g></svg>
<svg class="b" style="left:43px;top:415px;" width="17" height="18" viewBox="0 0 17 18"><g transform="scale(1.0,1.0)"><path d="M3 0H11.5V14.5H3Z" fill="url(#fbody)"/><path d="M11.5 0V14.5" stroke="#E7BE57" stroke-width="0.6"/><path d="M0 0.6L4.2 2.2V17L0 15.4Z" fill="url(#flap)"/><path d="M4.2 2.2V17" stroke="#E9C462" stroke-width="0.5"/></g></svg>
<div class="t" style="left:65px;top:446.05px;font-size:15px;line-height:15px;color:#000;letter-spacing:0.107px;">Bilder</div>
<svg class="b" style="left:43px;top:445px;" width="17" height="18" viewBox="0 0 17 18"><g transform="scale(1.0,1.0)"><path d="M3 0H11.5V14.5H3Z" fill="url(#fbody)"/><path d="M11.5 0V14.5" stroke="#E7BE57" stroke-width="0.6"/><path d="M0 0.6L4.2 2.2V17L0 15.4Z" fill="url(#flap)"/><path d="M4.2 2.2V17" stroke="#E9C462" stroke-width="0.5"/></g><circle cx="3" cy="12.5" r="5.5" fill="#45B84A"/><path d="M-0.2999999999999998 12.6L2.1 15.1L6.6 10.1" fill="none" stroke="#fff" stroke-width="1.7"/></svg>
<div class="t" style="left:65px;top:476.05px;font-size:15px;line-height:15px;color:#000;letter-spacing:-0.134px;">Musik</div>
<svg class="b" style="left:43px;top:475px;" width="17" height="18" viewBox="0 0 17 18"><g transform="scale(1.0,1.0)"><path d="M3 0H11.5V14.5H3Z" fill="url(#fbody)"/><path d="M11.5 0V14.5" stroke="#E7BE57" stroke-width="0.6"/><path d="M0 0.6L4.2 2.2V17L0 15.4Z" fill="url(#flap)"/><path d="M4.2 2.2V17" stroke="#E9C462" stroke-width="0.5"/></g><path d="M10 2.5V14.5" stroke="#1E8EEA" stroke-width="1.7"/><path d="M10 2.5Q15.5 5 15.3 11.5Q14.5 8 10.5 7" fill="#1E8EEA" stroke="#1E8EEA" stroke-width="1"/><ellipse cx="7.6" cy="14.6" rx="3" ry="2.5" fill="#1E8EEA"/></svg>
<div class="t" style="left:65px;top:506.05px;font-size:15px;line-height:15px;color:#000;letter-spacing:-0.490px;">Screenshots</div>
<svg class="b" style="left:43px;top:505px;" width="17" height="18" viewBox="0 0 17 18"><g transform="scale(1.0,1.0)"><path d="M3 0H11.5V14.5H3Z" fill="url(#fbody)"/><path d="M11.5 0V14.5" stroke="#E7BE57" stroke-width="0.6"/><path d="M0 0.6L4.2 2.2V17L0 15.4Z" fill="url(#flap)"/><path d="M4.2 2.2V17" stroke="#E9C462" stroke-width="0.5"/></g><circle cx="3" cy="12.5" r="5.5" fill="#45B84A"/><path d="M-0.2999999999999998 12.6L2.1 15.1L6.6 10.1" fill="none" stroke="#fff" stroke-width="1.7"/></svg>
<div class="t" style="left:65px;top:536.05px;font-size:15px;line-height:15px;color:#000;letter-spacing:-0.081px;">Thunderbird</div>
<svg class="b" style="left:43px;top:535px;" width="17" height="18" viewBox="0 0 17 18"><g transform="scale(1.0,1.0)"><path d="M3 0H11.5V14.5H3Z" fill="url(#fbody)"/><path d="M11.5 0V14.5" stroke="#E7BE57" stroke-width="0.6"/><path d="M0 0.6L4.2 2.2V17L0 15.4Z" fill="url(#flap)"/><path d="M4.2 2.2V17" stroke="#E9C462" stroke-width="0.5"/></g></svg>
<div class="t" style="left:55px;top:576.05px;font-size:15px;line-height:15px;color:#000;letter-spacing:-0.004px;">Desktop</div>
<svg class="b" style="left:31px;top:577px;" width="18" height="13" viewBox="0 0 18 13"><rect x="0.5" y="0.5" width="17" height="12" fill="#16A0FA" stroke="#0A6FC0"/><path d="M9 1L14 1L7 11H2Z" fill="#0894F5" opacity="0.6"/><rect x="1" y="10.5" width="16" height="1.5" fill="#0A5E9E"/><circle cx="3" cy="11.2" r="0.9" fill="#fff"/><circle cx="14" cy="11.2" r="0.9" fill="#fff"/><circle cx="16" cy="11.2" r="0.9" fill="#fff"/></svg>
<div class="t" style="left:65px;top:606.05px;font-size:15px;line-height:15px;color:#000;letter-spacing:-0.170px;">OneDrive</div>
<svg class="b" style="left:40px;top:605px;" width="20" height="19" viewBox="0 0 20 19"><path d="M3 10Q2.5 5.5 6.5 5Q8.5 1 12.5 1.2Q16 1.5 16.5 5.5Q19.5 6 19.3 9.5Q19 12.7 16 12.7H4.5Q3 12.7 3 10Z" fill="#1C7ED8"/><path d="M8 6Q11.5 3 15.5 6" fill="none" stroke="#fff" stroke-width="0.8"/><circle cx="5.9" cy="12" r="5.4" fill="#45B84A"/><path d="M2.6000000000000005 12.1L5.0 14.6L9.5 9.6" fill="none" stroke="#fff" stroke-width="1.7"/></svg>
<div class="t" style="left:65px;top:636.05px;font-size:15px;line-height:15px;color:#000;letter-spacing:-0.043px;">Daniela Simon</div>
<svg class="b" style="left:43px;top:635px;" width="17" height="18" viewBox="0 0 17 18"><g transform="scale(1.0,1.0)"><path d="M3 0H11.5V14.5H3Z" fill="url(#fbody)"/><path d="M11.5 0V14.5" stroke="#E7BE57" stroke-width="0.6"/><path d="M0 0.6L4.2 2.2V17L0 15.4Z" fill="url(#flap)"/><path d="M4.2 2.2V17" stroke="#E9C462" stroke-width="0.5"/></g><path d="M5.5 17.5Q5.5 11.5 10.5 11.5Q16 11.5 16 17.5Z" fill="#4C9A6C"/><circle cx="10.5" cy="8.2" r="3.3" fill="#A9805F"/><path d="M7.2 7.5Q7.5 4.6 10.5 4.7Q13.5 4.6 13.8 7.5Q12 6 10.5 6.4Q9 6 7.2 7.5Z" fill="#2E2A28"/><path d="M9.5 11.8L10.5 14L11.5 11.8" fill="#fff"/></svg>
<div class="t" style="left:65px;top:666.05px;font-size:15px;line-height:15px;color:#000;letter-spacing:-0.595px;">Dieser PC</div>
<svg class="b" style="left:40px;top:665px;" width="20" height="18" viewBox="0 0 20 18"><path d="M7 0.7L19.7 4V12.6L7 9.5Z" fill="#2EA6F2" stroke="#3A3A3A" stroke-width="0.7"/><path d="M8 1.8L12 2.8L8 8Z" fill="#7CCBF8" opacity="0.6"/><rect x="12" y="11.5" width="4" height="1.5" fill="#AAAAAA"/><path d="M10.5 13H18L16.5 14H12Z" fill="#CFCFCF"/><path d="M0.8 14.5L9 12.6L15 15.5L6.5 17.3Z" fill="#E0E0E0" stroke="#C8C8C8" stroke-width="0.5"/></svg>
<div class="t" style="left:75px;top:696.05px;font-size:15px;line-height:15px;color:#000;letter-spacing:0.107px;">Bilder</div>
<svg class="b" style="left:53px;top:695px;" width="17" height="18" viewBox="0 0 17 18"><g transform="scale(1.0,1.0)"><path d="M3 0H11.5V14.5H3Z" fill="url(#fbody)"/><path d="M11.5 0V14.5" stroke="#E7BE57" stroke-width="0.6"/><path d="M0 0.6L4.2 2.2V17L0 15.4Z" fill="url(#flap)"/><path d="M4.2 2.2V17" stroke="#E9C462" stroke-width="0.5"/></g><rect x="5.5" y="8.5" width="10" height="8" fill="#fff" stroke="#8A8A8A" stroke-width="0.9"/><rect x="7" y="10" width="7" height="5" fill="#6DA6D8"/><path d="M7 15L9.5 12.5L11 13.5L14 12V15Z" fill="#3E6E4E"/></svg>
<div class="t" style="left:75px;top:726.05px;font-size:15px;line-height:15px;color:#000;letter-spacing:-0.004px;">Desktop</div>
<svg class="b" style="left:53px;top:725px;" width="17" height="18" viewBox="0 0 17 18"><g transform="scale(1.0,1.0)"><path d="M3 0H11.5V14.5H3Z" fill="url(#fbody)"/><path d="M11.5 0V14.5" stroke="#E7BE57" stroke-width="0.6"/><path d="M0 0.6L4.2 2.2V17L0 15.4Z" fill="url(#flap)"/><path d="M4.2 2.2V17" stroke="#E9C462" stroke-width="0.5"/></g><rect x="5" y="8" width="11" height="8" fill="#16A0FA" stroke="#0A6FC0" stroke-width="0.9"/><rect x="5.5" y="14" width="10" height="1.5" fill="#0A5E9E"/><circle cx="6.7" cy="14.8" r="0.7" fill="#fff"/><circle cx="12.5" cy="14.8" r="0.7" fill="#fff"/><circle cx="14.3" cy="14.8" r="0.7" fill="#fff"/></svg>
<div class="t" style="left:75px;top:756.05px;font-size:15px;line-height:15px;color:#000;letter-spacing:0.031px;">Dokumente</div>
<svg class="b" style="left:53px;top:755px;" width="17" height="18" viewBox="0 0 17 18"><g transform="scale(1.0,1.0)"><path d="M3 0H11.5V14.5H3Z" fill="url(#fbody)"/><path d="M11.5 0V14.5" stroke="#E7BE57" stroke-width="0.6"/><path d="M0 0.6L4.2 2.2V17L0 15.4Z" fill="url(#flap)"/><path d="M4.2 2.2V17" stroke="#E9C462" stroke-width="0.5"/></g><path d="M5.3 2.3H13L15.7 5V16.7H5.3Z" fill="#fff" stroke="#7A7A7A" stroke-width="0.8"/><path d="M8.5 4.5L7 8.5M8.5 4.5L10 8.5M7 7.5H10M7 10H14M7 12.5H9.5M7 14.5H9.5" stroke="#3A8DDE" stroke-width="0.9" fill="none"/><path d="M10.5 12.5H14M10.5 14.5H14" stroke="#3C7A5A" stroke-width="1"/></svg>
<div class="t" style="left:75px;top:786.05px;font-size:15px;line-height:15px;color:#000;letter-spacing:0.087px;">Downloads</div>
<svg class="b" style="left:53px;top:785px;" width="17" height="18" viewBox="0 0 17 18"><g transform="scale(1.0,1.0)"><path d="M3 0H11.5V14.5H3Z" fill="url(#fbody)"/><path d="M11.5 0V14.5" stroke="#E7BE57" stroke-width="0.6"/><path d="M0 0.6L4.2 2.2V17L0 15.4Z" fill="url(#flap)"/><path d="M4.2 2.2V17" stroke="#E9C462" stroke-width="0.5"/></g><path d="M8.5 7H12.5V11H15.5L10.5 16L5.5 11H8.5Z" fill="#3A8DDE"/></svg>
<div class="t" style="left:75px;top:816.05px;font-size:15px;line-height:15px;color:#000;letter-spacing:-0.134px;">Musik</div>
<svg class="b" style="left:53px;top:815px;" width="17" height="18" viewBox="0 0 17 18"><g transform="scale(1.0,1.0)"><path d="M3 0H11.5V14.5H3Z" fill="url(#fbody)"/><path d="M11.5 0V14.5" stroke="#E7BE57" stroke-width="0.6"/><path d="M0 0.6L4.2 2.2V17L0 15.4Z" fill="url(#flap)"/><path d="M4.2 2.2V17" stroke="#E9C462" stroke-width="0.5"/></g><path d="M10 2.5V14.5" stroke="#1E8EEA" stroke-width="1.7"/><path d="M10 2.5Q15.5 5 15.3 11.5Q14.5 8 10.5 7" fill="#1E8EEA" stroke="#1E8EEA" stroke-width="1"/><ellipse cx="7.6" cy="14.6" rx="3" ry="2.5" fill="#1E8EEA"/></svg>
<div class="t" style="left:75px;top:846.05px;font-size:15px;line-height:15px;color:#000;letter-spacing:-0.099px;">Videos</div>
<svg class="b" style="left:53px;top:845px;" width="17" height="18" viewBox="0 0 17 18"><g transform="scale(1.0,1.0)"><path d="M3 0H11.5V14.5H3Z" fill="url(#fbody)"/><path d="M11.5 0V14.5" stroke="#E7BE57" stroke-width="0.6"/><path d="M0 0.6L4.2 2.2V17L0 15.4Z" fill="url(#flap)"/><path d="M4.2 2.2V17" stroke="#E9C462" stroke-width="0.5"/></g><rect x="5" y="3" width="11" height="13" fill="#3B3B3B"/><rect x="7.5" y="4" width="6" height="5" fill="#4F8FD6"/><rect x="7.5" y="10" width="6" height="5" fill="#D9A441"/><path d="M6.2 4V15.5M14.8 4V15.5" stroke="#eee" stroke-width="0.9" stroke-dasharray="1 1"/></svg>
<div class="t" style="left:75px;top:876.05px;font-size:15px;line-height:15px;color:#000;letter-spacing:-0.906px;">OS (C:)</div>
<svg class="b" style="left:50px;top:877px;" width="20" height="15" viewBox="0 0 20 15"><g fill="#12A8F0"><rect x="0" y="0.5" width="3" height="3"/><rect x="4" y="0" width="4" height="3.5"/><rect x="0" y="4.5" width="3" height="3"/><rect x="4" y="4.5" width="4" height="3.5"/></g><g transform="translate(0.5,6)"><path d="M0 4L9 0.5L18.5 2L10 5.5Z" fill="#E9E9E9"/><path d="M10 5.5L18.5 2V5.5L10 9Z" fill="#C9C9C9"/><path d="M0 4L10 5.5V9L0 7.5Z" fill="#D5D5D5"/><path d="M0.3 4.8L8.5 6V8.3L0.3 7.1Z" fill="#333"/><circle cx="7.4" cy="7.2" r="0.75" fill="#3DCB4A"/></g></svg>
<div class="t" style="left:75px;top:906.05px;font-size:15px;line-height:15px;color:#000;letter-spacing:-0.207px;">DVD-RW-Laufwerk (D:)</div>
<svg class="b" style="left:50px;top:903px;" width="20" height="19" viewBox="0 0 20 19"><circle cx="13" cy="6" r="5.5" fill="#D4D4D4" stroke="#9A9A9A" stroke-width="0.8"/><circle cx="13" cy="6" r="3.5" fill="none" stroke="#E6E6E6" stroke-width="1"/><rect x="11.8" y="4.8" width="2.4" height="2.4" fill="#fff"/><g transform="translate(0.5,10)"><path d="M0 4L9 0.5L18.5 2L10 5.5Z" fill="#E9E9E9"/><path d="M10 5.5L18.5 2V5.5L10 9Z" fill="#C9C9C9"/><path d="M0 4L10 5.5V9L0 7.5Z" fill="#D5D5D5"/><path d="M0.3 4.8L8.5 6V8.3L0.3 7.1Z" fill="#333"/><circle cx="7.4" cy="7.2" r="0.75" fill="#3DCB4A"/></g></svg>
<div class="t" style="left:75px;top:936.05px;font-size:15px;line-height:15px;color:#000;letter-spacing:-0.600px;">DRIVE-N-GO (G:)</div>
<svg class="b" style="left:50px;top:942px;" width="20" height="10" viewBox="0 0 20 10"><g transform="translate(0.5,0)"><path d="M0 4L9 0.5L18.5 2L10 5.5Z" fill="#E9E9E9"/><path d="M10 5.5L18.5 2V5.5L10 9Z" fill="#C9C9C9"/><path d="M0 4L10 5.5V9L0 7.5Z" fill="#D5D5D5"/><path d="M0.3 4.8L8.5 6V8.3L0.3 7.1Z" fill="#333"/><circle cx="7.4" cy="7.2" r="0.75" fill="#3DCB4A"/></g></svg>
<div class="t" style="left:65px;top:966.05px;font-size:15px;line-height:15px;color:#000;letter-spacing:0.064px;">Bibliotheken</div>
<svg class="b" style="left:41px;top:965px;" width="18" height="16" viewBox="0 0 18 16"><path d="M0 1.5H6L7.5 3H18V16H0Z" fill="#F8D775"/><path d="M0 1.5H6L7.5 3H18V4.5H0Z" fill="#EFC452"/><rect x="2" y="1" width="4" height="1.2" fill="#fff" opacity="0.9"/><path d="M3 16V9.5H15V16H12V12.5H6V16Z" fill="#1E8EEA"/></svg>
<div class="t" style="left:65px;top:996.05px;font-size:15px;line-height:15px;color:#000;letter-spacing:-0.600px;">DRIVE-N-GO (G:)</div>
<svg class="b" style="left:50px;top:1002px;" width="20" height="10" viewBox="0 0 20 10"><g transform="translate(0.5,0)"><path d="M0 4L9 0.5L18.5 2L10 5.5Z" fill="#E9E9E9"/><path d="M10 5.5L18.5 2V5.5L10 9Z" fill="#C9C9C9"/><path d="M0 4L10 5.5V9L0 7.5Z" fill="#D5D5D5"/><path d="M0.3 4.8L8.5 6V8.3L0.3 7.1Z" fill="#333"/><circle cx="7.4" cy="7.2" r="0.75" fill="#3DCB4A"/></g></svg>
<div class="b" style="left:0px;top:1001px;width:472px;height:2px;background:#fff"></div>
<div class="b" style="left:472px;top:218px;width:1448px;height:783px;background:#fff"></div>
<div class="b" style="left:492px;top:245px;width:717px;height:27px;background:#CCE8FF;border:1px solid #99D1FF;box-sizing:border-box"></div>
<svg class="b" style="left:500px;top:248px;" width="14" height="18" viewBox="0 0 14 18"><path d="M0.5 0.5H10.5L13.5 3.5V17.5H0.5Z" fill="url(#docg)" stroke="#838383"/><path d="M10.5 0.5V3.5H13.5" fill="#fff" stroke="#838383"/></svg>
<div class="t" style="left:522px;top:251.30px;font-size:15px;line-height:15px;color:#000;letter-spacing:-0.578px;">addons (2016_09_06 19_24_56 UTC).json</div>
<div class="t" style="left:821px;top:251.30px;font-size:15px;line-height:15px;color:#6D6D6D;letter-spacing:-0.549px;">04.09.2016 17:41</div>
<div class="t" style="left:971px;top:251.30px;font-size:15px;line-height:15px;color:#6D6D6D;letter-spacing:-0.303px;">JSON-Datei</div>
<div class="t" style="right:717.98px;text-align:right;top:251.30px;font-size:15px;line-height:15px;color:#6D6D6D;letter-spacing:-0.975px;">18 KB</div>
<svg class="b" style="left:500px;top:275px;" width="14" height="18" viewBox="0 0 14 18"><path d="M0.5 0.5H10.5L13.5 3.5V17.5H0.5Z" fill="url(#docg)" stroke="#838383"/><path d="M10.5 0.5V3.5H13.5" fill="#fff" stroke="#838383"/></svg>
<div class="t" style="left:522px;top:278.30px;font-size:15px;line-height:15px;color:#000;letter-spacing:-0.578px;">addons (2016_09_07 18_18_23 UTC).json</div>
<div class="t" style="left:821px;top:278.30px;font-size:15px;line-height:15px;color:#6D6D6D;letter-spacing:-0.549px;">07.09.2016 21:08</div>
<div class="t" style="left:971px;top:278.30px;font-size:15px;line-height:15px;color:#6D6D6D;letter-spacing:-0.303px;">JSON-Datei</div>
<div class="t" style="right:717.98px;text-align:right;top:278.30px;font-size:15px;line-height:15px;color:#6D6D6D;letter-spacing:-0.975px;">18 KB</div>
<svg class="b" style="left:500px;top:302px;" width="14" height="18" viewBox="0 0 14 18"><path d="M0.5 0.5H10.5L13.5 3.5V17.5H0.5Z" fill="url(#docg)" stroke="#838383"/><path d="M10.5 0.5V3.5H13.5" fill="#fff" stroke="#838383"/></svg>
<div class="t" style="left:522px;top:305.30px;font-size:15px;line-height:15px;color:#000;letter-spacing:-0.578px;">addons (2016_09_10 08_20_05 UTC).json</div>
<div class="t" style="left:821px;top:305.30px;font-size:15px;line-height:15px;color:#6D6D6D;letter-spacing:-0.479px;">10.09.2016 11:14</div>
<div class="t" style="left:971px;top:305.30px;font-size:15px;line-height:15px;color:#6D6D6D;letter-spacing:-0.303px;">JSON-Datei</div>
<div class="t" style="right:717.98px;text-align:right;top:305.30px;font-size:15px;line-height:15px;color:#6D6D6D;letter-spacing:-0.975px;">18 KB</div>
<svg class="b" style="left:500px;top:329px;" width="14" height="18" viewBox="0 0 14 18"><path d="M0.5 0.5H10.5L13.5 3.5V17.5H0.5Z" fill="url(#docg)" stroke="#838383"/><path d="M10.5 0.5V3.5H13.5" fill="#fff" stroke="#838383"/></svg>
<div class="t" style="left:522px;top:332.30px;font-size:15px;line-height:15px;color:#000;letter-spacing:-0.578px;">addons (2016_09_18 12_08_54 UTC).json</div>
<div class="t" style="left:821px;top:332.30px;font-size:15px;line-height:15px;color:#6D6D6D;letter-spacing:-0.549px;">17.09.2016 15:38</div>
<div class="t" style="left:971px;top:332.30px;font-size:15px;line-height:15px;color:#6D6D6D;letter-spacing:-0.303px;">JSON-Datei</div>
<div class="t" style="right:717.98px;text-align:right;top:332.30px;font-size:15px;line-height:15px;color:#6D6D6D;letter-spacing:-0.975px;">18 KB</div>
<svg class="b" style="left:500px;top:356px;" width="14" height="18" viewBox="0 0 14 18"><path d="M0.5 0.5H10.5L13.5 3.5V17.5H0.5Z" fill="url(#docg)" stroke="#838383"/><path d="M10.5 0.5V3.5H13.5" fill="#fff" stroke="#838383"/></svg>
<div class="t" style="left:522px;top:359.30px;font-size:15px;line-height:15px;color:#000;letter-spacing:-0.578px;">addons (2016_09_18 21_12_33 UTC).json</div>
<div class="t" style="left:821px;top:359.30px;font-size:15px;line-height:15px;color:#6D6D6D;letter-spacing:-0.549px;">18.09.2016 15:43</div>
<div class="t" style="left:971px;top:359.30px;font-size:15px;line-height:15px;color:#6D6D6D;letter-spacing:-0.303px;">JSON-Datei</div>
<div class="t" style="right:717.98px;text-align:right;top:359.30px;font-size:15px;line-height:15px;color:#6D6D6D;letter-spacing:-0.975px;">18 KB</div>
<svg class="b" style="left:500px;top:383px;" width="14" height="18" viewBox="0 0 14 18"><path d="M0.5 0.5H10.5L13.5 3.5V17.5H0.5Z" fill="url(#docg)" stroke="#838383"/><path d="M10.5 0.5V3.5H13.5" fill="#fff" stroke="#838383"/></svg>
<div class="t" style="left:522px;top:386.30px;font-size:15px;line-height:15px;color:#000;letter-spacing:-0.578px;">addons (2016_10_03 20_54_48 UTC).json</div>
<div class="t" style="left:821px;top:386.30px;font-size:15px;line-height:15px;color:#6D6D6D;letter-spacing:-0.549px;">02.10.2016 20:12</div>
<div class="t" style="left:971px;top:386.30px;font-size:15px;line-height:15px;color:#6D6D6D;letter-spacing:-0.303px;">JSON-Datei</div>
<div class="t" style="right:717.98px;text-align:right;top:386.30px;font-size:15px;line-height:15px;color:#6D6D6D;letter-spacing:-0.975px;">18 KB</div>
<svg class="b" style="left:500px;top:410px;" width="14" height="18" viewBox="0 0 14 18"><path d="M0.5 0.5H10.5L13.5 3.5V17.5H0.5Z" fill="url(#docg)" stroke="#838383"/><path d="M10.5 0.5V3.5H13.5" fill="#fff" stroke="#838383"/></svg>
<div class="t" style="left:522px;top:413.30px;font-size:15px;line-height:15px;color:#000;letter-spacing:-0.578px;">addons (2016_10_15 23_13_31 UTC).json</div>
<div class="t" style="left:821px;top:413.30px;font-size:15px;line-height:15px;color:#6D6D6D;letter-spacing:-0.549px;">16.10.2016 00:53</div>
<div class="t" style="left:971px;top:413.30px;font-size:15px;line-height:15px;color:#6D6D6D;letter-spacing:-0.303px;">JSON-Datei</div>
<div class="t" style="right:717.98px;text-align:right;top:413.30px;font-size:15px;line-height:15px;color:#6D6D6D;letter-spacing:-0.975px;">18 KB</div>
<svg class="b" style="left:500px;top:437px;" width="14" height="18" viewBox="0 0 14 18"><path d="M0.5 0.5H10.5L13.5 3.5V17.5H0.5Z" fill="url(#docg)" stroke="#838383"/><path d="M10.5 0.5V3.5H13.5" fill="#fff" stroke="#838383"/></svg>
<div class="t" style="left:522px;top:440.30px;font-size:15px;line-height:15px;color:#000;letter-spacing:-0.578px;">addons (2016_10_19 13_41_51 UTC).json</div>
<div class="t" style="left:821px;top:440.30px;font-size:15px;line-height:15px;color:#6D6D6D;letter-spacing:-0.549px;">19.10.2016 15:41</div>
<div class="t" style="left:971px;top:440.30px;font-size:15px;line-height:15px;color:#6D6D6D;letter-spacing:-0.303px;">JSON-Datei</div>
<div class="t" style="right:717.98px;text-align:right;top:440.30px;font-size:15px;line-height:15px;color:#6D6D6D;letter-spacing:-0.975px;">18 KB</div>
<svg class="b" style="left:500px;top:464px;" width="14" height="18" viewBox="0 0 14 18"><path d="M0.5 0.5H10.5L13.5 3.5V17.5H0.5Z" fill="url(#docg)" stroke="#838383"/><path d="M10.5 0.5V3.5H13.5" fill="#fff" stroke="#838383"/></svg>
<div class="t" style="left:522px;top:467.30px;font-size:15px;line-height:15px;color:#000;letter-spacing:-0.578px;">addons (2016_10_21 13_47_29 UTC).json</div>
<div class="t" style="left:821px;top:467.30px;font-size:15px;line-height:15px;color:#6D6D6D;letter-spacing:-0.549px;">21.10.2016 16:09</div>
<div class="t" style="left:971px;top:467.30px;font-size:15px;line-height:15px;color:#6D6D6D;letter-spacing:-0.303px;">JSON-Datei</div>
<div class="t" style="right:717.98px;text-align:right;top:467.30px;font-size:15px;line-height:15px;color:#6D6D6D;letter-spacing:-0.975px;">18 KB</div>
<svg class="b" style="left:500px;top:491px;" width="14" height="18" viewBox="0 0 14 18"><path d="M0.5 0.5H10.5L13.5 3.5V17.5H0.5Z" fill="url(#docg)" stroke="#838383"/><path d="M10.5 0.5V3.5H13.5" fill="#fff" stroke="#838383"/></svg>
<div class="t" style="left:522px;top:494.30px;font-size:15px;line-height:15px;color:#000;letter-spacing:-0.578px;">addons (2016_10_23 13_26_09 UTC).json</div>
<div class="t" style="left:821px;top:494.30px;font-size:15px;line-height:15px;color:#6D6D6D;letter-spacing:-0.479px;">23.10.2016 16:11</div>
<div class="t" style="left:971px;top:494.30px;font-size:15px;line-height:15px;color:#6D6D6D;letter-spacing:-0.303px;">JSON-Datei</div>
<div class="t" style="right:717.98px;text-align:right;top:494.30px;font-size:15px;line-height:15px;color:#6D6D6D;letter-spacing:-0.975px;">18 KB</div>
<svg class="b" style="left:500px;top:518px;" width="14" height="18" viewBox="0 0 14 18"><path d="M0.5 0.5H10.5L13.5 3.5V17.5H0.5Z" fill="url(#docg)" stroke="#838383"/><path d="M10.5 0.5V3.5H13.5" fill="#fff" stroke="#838383"/></svg>
<div class="t" style="left:522px;top:521.30px;font-size:15px;line-height:15px;color:#000;letter-spacing:-0.578px;">addons (2016_10_24 20_04_45 UTC).json</div>
<div class="t" style="left:821px;top:521.30px;font-size:15px;line-height:15px;color:#6D6D6D;letter-spacing:-0.549px;">24.10.2016 22:51</div>
<div class="t" style="left:971px;top:521.30px;font-size:15px;line-height:15px;color:#6D6D6D;letter-spacing:-0.303px;">JSON-Datei</div>
<div class="t" style="right:717.98px;text-align:right;top:521.30px;font-size:15px;line-height:15px;color:#6D6D6D;letter-spacing:-0.975px;">18 KB</div>
<svg class="b" style="left:500px;top:545px;" width="14" height="18" viewBox="0 0 14 18"><path d="M0.5 0.5H10.5L13.5 3.5V17.5H0.5Z" fill="url(#docg)" stroke="#838383"/><path d="M10.5 0.5V3.5H13.5" fill="#fff" stroke="#838383"/></svg>
<div class="t" style="left:522px;top:548.30px;font-size:15px;line-height:15px;color:#000;letter-spacing:-0.578px;">addons (2016_10_26 12_23_41 UTC).json</div>
<div class="t" style="left:821px;top:548.30px;font-size:15px;line-height:15px;color:#6D6D6D;letter-spacing:-0.549px;">25.10.2016 22:51</div>
<div class="t" style="left:971px;top:548.30px;font-size:15px;line-height:15px;color:#6D6D6D;letter-spacing:-0.303px;">JSON-Datei</div>
<div class="t" style="right:717.98px;text-align:right;top:548.30px;font-size:15px;line-height:15px;color:#6D6D6D;letter-spacing:-0.975px;">18 KB</div>
<svg class="b" style="left:500px;top:572px;" width="14" height="18" viewBox="0 0 14 18"><path d="M0.5 0.5H10.5L13.5 3.5V17.5H0.5Z" fill="url(#docg)" stroke="#838383"/><path d="M10.5 0.5V3.5H13.5" fill="#fff" stroke="#838383"/></svg>
<div class="t" style="left:522px;top:575.30px;font-size:15px;line-height:15px;color:#000;letter-spacing:-0.578px;">addons (2016_10_28 18_20_26 UTC).json</div>
<div class="t" style="left:821px;top:575.30px;font-size:15px;line-height:15px;color:#6D6D6D;letter-spacing:-0.549px;">28.10.2016 21:16</div>
<div class="t" style="left:971px;top:575.30px;font-size:15px;line-height:15px;color:#6D6D6D;letter-spacing:-0.303px;">JSON-Datei</div>
<div class="t" style="right:717.98px;text-align:right;top:575.30px;font-size:15px;line-height:15px;color:#6D6D6D;letter-spacing:-0.975px;">18 KB</div>
<svg class="b" style="left:500px;top:599px;" width="14" height="18" viewBox="0 0 14 18"><path d="M0.5 0.5H10.5L13.5 3.5V17.5H0.5Z" fill="url(#docg)" stroke="#838383"/><path d="M10.5 0.5V3.5H13.5" fill="#fff" stroke="#838383"/></svg>
<div class="t" style="left:522px;top:602.30px;font-size:15px;line-height:15px;color:#000;letter-spacing:-0.578px;">addons (2016_10_30 15_30_33 UTC).json</div>
<div class="t" style="left:821px;top:602.30px;font-size:15px;line-height:15px;color:#6D6D6D;letter-spacing:-0.549px;">30.10.2016 16:26</div>
<div class="t" style="left:971px;top:602.30px;font-size:15px;line-height:15px;color:#6D6D6D;letter-spacing:-0.303px;">JSON-Datei</div>
<div class="t" style="right:717.98px;text-align:right;top:602.30px;font-size:15px;line-height:15px;color:#6D6D6D;letter-spacing:-0.975px;">18 KB</div>
<svg class="b" style="left:500px;top:626px;" width="14" height="18" viewBox="0 0 14 18"><path d="M0.5 0.5H10.5L13.5 3.5V17.5H0.5Z" fill="url(#docg)" stroke="#838383"/><path d="M10.5 0.5V3.5H13.5" fill="#fff" stroke="#838383"/></svg>
<div class="t" style="left:522px;top:629.30px;font-size:15px;line-height:15px;color:#000;letter-spacing:-0.578px;">addons (2016_10_31 18_54_38 UTC).json</div>
<div class="t" style="left:821px;top:629.30px;font-size:15px;line-height:15px;color:#6D6D6D;letter-spacing:-0.549px;">31.10.2016 19:48</div>
<div class="t" style="left:971px;top:629.30px;font-size:15px;line-height:15px;color:#6D6D6D;letter-spacing:-0.303px;">JSON-Datei</div>
<div class="t" style="right:717.98px;text-align:right;top:629.30px;font-size:15px;line-height:15px;color:#6D6D6D;letter-spacing:-0.975px;">18 KB</div>
<svg class="b" style="left:500px;top:653px;" width="14" height="18" viewBox="0 0 14 18"><path d="M0.5 0.5H10.5L13.5 3.5V17.5H0.5Z" fill="url(#docg)" stroke="#838383"/><path d="M10.5 0.5V3.5H13.5" fill="#fff" stroke="#838383"/></svg>
<div class="t" style="left:522px;top:656.30px;font-size:15px;line-height:15px;color:#000;letter-spacing:-0.548px;">addons (2016_11_02 13_10_53 UTC).json</div>
<div class="t" style="left:821px;top:656.30px;font-size:15px;line-height:15px;color:#6D6D6D;letter-spacing:-0.479px;">02.11.2016 14:07</div>
<div class="t" style="left:971px;top:656.30px;font-size:15px;line-height:15px;color:#6D6D6D;letter-spacing:-0.303px;">JSON-Datei</div>
<div class="t" style="right:717.98px;text-align:right;top:656.30px;font-size:15px;line-height:15px;color:#6D6D6D;letter-spacing:-0.975px;">18 KB</div>
<svg class="b" style="left:500px;top:680px;" width="14" height="18" viewBox="0 0 14 18"><path d="M0.5 0.5H10.5L13.5 3.5V17.5H0.5Z" fill="url(#docg)" stroke="#838383"/><path d="M10.5 0.5V3.5H13.5" fill="#fff" stroke="#838383"/></svg>
<div class="t" style="left:522px;top:683.30px;font-size:15px;line-height:15px;color:#000;letter-spacing:-0.548px;">addons (2016_11_12 19_41_59 UTC).json</div>
<div class="t" style="left:821px;top:683.30px;font-size:15px;line-height:15px;color:#6D6D6D;letter-spacing:-0.479px;">12.11.2016 12:46</div>
<div class="t" style="left:971px;top:683.30px;font-size:15px;line-height:15px;color:#6D6D6D;letter-spacing:-0.303px;">JSON-Datei</div>
<div class="t" style="right:717.98px;text-align:right;top:683.30px;font-size:15px;line-height:15px;color:#6D6D6D;letter-spacing:-0.975px;">18 KB</div>
<div class="b" style="left:492px;top:704px;width:717px;height:27px;background:#E5F3FF"></div>
<svg class="b" style="left:500px;top:707px;" width="14" height="18" viewBox="0 0 14 18"><path d="M0.5 0.5H10.5L13.5 3.5V17.5H0.5Z" fill="url(#docg)" stroke="#838383"/><path d="M10.5 0.5V3.5H13.5" fill="#fff" stroke="#838383"/></svg>
<div class="t" style="left:522px;top:710.30px;font-size:15px;line-height:15px;color:#000;letter-spacing:-0.548px;">addons (2016_11_16 15_44_31 UTC).json</div>
<div class="t" style="left:821px;top:710.30px;font-size:15px;line-height:15px;color:#6D6D6D;letter-spacing:-0.479px;">16.11.2016 14:48</div>
<div class="t" style="left:971px;top:710.30px;font-size:15px;line-height:15px;color:#6D6D6D;letter-spacing:-0.303px;">JSON-Datei</div>
<div class="t" style="right:717.98px;text-align:right;top:710.30px;font-size:15px;line-height:15px;color:#6D6D6D;letter-spacing:-0.975px;">18 KB</div>
<svg class="b" style="left:500px;top:734px;" width="14" height="18" viewBox="0 0 14 18"><path d="M0.5 0.5H10.5L13.5 3.5V17.5H0.5Z" fill="url(#docg)" stroke="#838383"/><path d="M10.5 0.5V3.5H13.5" fill="#fff" stroke="#838383"/></svg>
<div class="t" style="left:522px;top:737.30px;font-size:15px;line-height:15px;color:#000;letter-spacing:-0.548px;">addons (2016_11_27 13_36_01 UTC).json</div>
<div class="t" style="left:821px;top:737.30px;font-size:15px;line-height:15px;color:#6D6D6D;letter-spacing:-0.479px;">27.11.2016 13:28</div>
<div class="t" style="left:971px;top:737.30px;font-size:15px;line-height:15px;color:#6D6D6D;letter-spacing:-0.303px;">JSON-Datei</div>
<div class="t" style="right:717.98px;text-align:right;top:737.30px;font-size:15px;line-height:15px;color:#6D6D6D;letter-spacing:-0.975px;">18 KB</div>
<svg class="b" style="left:500px;top:761px;" width="14" height="18" viewBox="0 0 14 18"><path d="M0.5 0.5H10.5L13.5 3.5V17.5H0.5Z" fill="url(#docg)" stroke="#838383"/><path d="M10.5 0.5V3.5H13.5" fill="#fff" stroke="#838383"/></svg>
<div class="t" style="left:522px;top:764.30px;font-size:15px;line-height:15px;color:#000;letter-spacing:-0.578px;">addons (2016_12_03 16_00_35 UTC).json</div>
<div class="t" style="left:821px;top:764.30px;font-size:15px;line-height:15px;color:#6D6D6D;letter-spacing:-0.549px;">02.12.2016 19:24</div>
<div class="t" style="left:971px;top:764.30px;font-size:15px;line-height:15px;color:#6D6D6D;letter-spacing:-0.303px;">JSON-Datei</div>
<div class="t" style="right:717.98px;text-align:right;top:764.30px;font-size:15px;line-height:15px;color:#6D6D6D;letter-spacing:-0.975px;">18 KB</div>
<svg class="b" style="left:500px;top:788px;" width="14" height="18" viewBox="0 0 14 18"><path d="M0.5 0.5H10.5L13.5 3.5V17.5H0.5Z" fill="url(#docg)" stroke="#838383"/><path d="M10.5 0.5V3.5H13.5" fill="#fff" stroke="#838383"/></svg>
<div class="t" style="left:522px;top:791.30px;font-size:15px;line-height:15px;color:#000;letter-spacing:-0.578px;">addons (2016_12_04 18_10_46 UTC).json</div>
<div class="t" style="left:821px;top:791.30px;font-size:15px;line-height:15px;color:#6D6D6D;letter-spacing:-0.549px;">04.12.2016 18:39</div>
<div class="t" style="left:971px;top:791.30px;font-size:15px;line-height:15px;color:#6D6D6D;letter-spacing:-0.303px;">JSON-Datei</div>
<div class="t" style="right:717.98px;text-align:right;top:791.30px;font-size:15px;line-height:15px;color:#6D6D6D;letter-spacing:-0.975px;">18 KB</div>
<svg class="b" style="left:500px;top:815px;" width="14" height="18" viewBox="0 0 14 18"><path d="M0.5 0.5H10.5L13.5 3.5V17.5H0.5Z" fill="url(#docg)" stroke="#838383"/><path d="M10.5 0.5V3.5H13.5" fill="#fff" stroke="#838383"/></svg>
<div class="t" style="left:522px;top:818.30px;font-size:15px;line-height:15px;color:#000;letter-spacing:-0.578px;">addons (2016_12_10 13_02_33 UTC).json</div>
<div class="t" style="left:821px;top:818.30px;font-size:15px;line-height:15px;color:#6D6D6D;letter-spacing:-0.549px;">10.12.2016 13:51</div>
<div class="t" style="left:971px;top:818.30px;font-size:15px;line-height:15px;color:#6D6D6D;letter-spacing:-0.303px;">JSON-Datei</div>
<div class="t" style="right:717.98px;text-align:right;top:818.30px;font-size:15px;line-height:15px;color:#6D6D6D;letter-spacing:-0.975px;">18 KB</div>
<svg class="b" style="left:500px;top:842px;" width="14" height="18" viewBox="0 0 14 18"><path d="M0.5 0.5H10.5L13.5 3.5V17.5H0.5Z" fill="url(#docg)" stroke="#838383"/><path d="M10.5 0.5V3.5H13.5" fill="#fff" stroke="#838383"/></svg>
<div class="t" style="left:522px;top:845.30px;font-size:15px;line-height:15px;color:#000;letter-spacing:-0.578px;">addons (2016_12_21 16_24_27 UTC).json</div>
<div class="t" style="left:821px;top:845.30px;font-size:15px;line-height:15px;color:#6D6D6D;letter-spacing:-0.549px;">21.12.2016 17:22</div>
<div class="t" style="left:971px;top:845.30px;font-size:15px;line-height:15px;color:#6D6D6D;letter-spacing:-0.303px;">JSON-Datei</div>
<div class="t" style="right:717.98px;text-align:right;top:845.30px;font-size:15px;line-height:15px;color:#6D6D6D;letter-spacing:-0.975px;">18 KB</div>
<svg class="b" style="left:500px;top:869px;" width="14" height="18" viewBox="0 0 14 18"><path d="M0.5 0.5H10.5L13.5 3.5V17.5H0.5Z" fill="url(#docg)" stroke="#838383"/><path d="M10.5 0.5V3.5H13.5" fill="#fff" stroke="#838383"/></svg>
<div class="t" style="left:522px;top:872.30px;font-size:15px;line-height:15px;color:#000;letter-spacing:-0.578px;">addons (2016_12_23 12_23_04 UTC).json</div>
<div class="t" style="left:821px;top:872.30px;font-size:15px;line-height:15px;color:#6D6D6D;letter-spacing:-0.549px;">23.12.2016 12:15</div>
<div class="t" style="left:971px;top:872.30px;font-size:15px;line-height:15px;color:#6D6D6D;letter-spacing:-0.303px;">JSON-Datei</div>
<div class="t" style="right:717.98px;text-align:right;top:872.30px;font-size:15px;line-height:15px;color:#6D6D6D;letter-spacing:-0.975px;">18 KB</div>
<svg class="b" style="left:500px;top:896px;" width="14" height="18" viewBox="0 0 14 18"><path d="M0.5 0.5H10.5L13.5 3.5V17.5H0.5Z" fill="url(#docg)" stroke="#838383"/><path d="M10.5 0.5V3.5H13.5" fill="#fff" stroke="#838383"/></svg>
<div class="t" style="left:522px;top:899.30px;font-size:15px;line-height:15px;color:#000;letter-spacing:-0.578px;">addons (2016_12_26 10_43_28 UTC).json</div>
<div class="t" style="left:821px;top:899.30px;font-size:15px;line-height:15px;color:#6D6D6D;letter-spacing:-0.549px;">25.12.2016 17:16</div>
<div class="t" style="left:971px;top:899.30px;font-size:15px;line-height:15px;color:#6D6D6D;letter-spacing:-0.303px;">JSON-Datei</div>
<div class="t" style="right:717.98px;text-align:right;top:899.30px;font-size:15px;line-height:15px;color:#6D6D6D;letter-spacing:-0.975px;">18 KB</div>
<svg class="b" style="left:500px;top:923px;" width="14" height="18" viewBox="0 0 14 18"><path d="M0.5 0.5H10.5L13.5 3.5V17.5H0.5Z" fill="url(#docg)" stroke="#838383"/><path d="M10.5 0.5V3.5H13.5" fill="#fff" stroke="#838383"/></svg>
<div class="t" style="left:522px;top:926.30px;font-size:15px;line-height:15px;color:#000;letter-spacing:-0.578px;">addons (2016_12_28 20_43_33 UTC).json</div>
<div class="t" style="left:821px;top:926.30px;font-size:15px;line-height:15px;color:#6D6D6D;letter-spacing:-0.549px;">28.12.2016 19:01</div>
<div class="t" style="left:971px;top:926.30px;font-size:15px;line-height:15px;color:#6D6D6D;letter-spacing:-0.303px;">JSON-Datei</div>
<div class="t" style="right:717.98px;text-align:right;top:926.30px;font-size:15px;line-height:15px;color:#6D6D6D;letter-spacing:-0.975px;">18 KB</div>
<svg class="b" style="left:500px;top:950px;" width="14" height="18" viewBox="0 0 14 18"><path d="M0.5 0.5H10.5L13.5 3.5V17.5H0.5Z" fill="url(#docg)" stroke="#838383"/><path d="M10.5 0.5V3.5H13.5" fill="#fff" stroke="#838383"/></svg>
<div class="t" style="left:522px;top:953.30px;font-size:15px;line-height:15px;color:#000;letter-spacing:-0.578px;">addons (2016_12_31 18_29_32 UTC).json</div>
<div class="t" style="left:821px;top:953.30px;font-size:15px;line-height:15px;color:#6D6D6D;letter-spacing:-0.549px;">31.12.2016 18:28</div>
<div class="t" style="left:971px;top:953.30px;font-size:15px;line-height:15px;color:#6D6D6D;letter-spacing:-0.303px;">JSON-Datei</div>
<div class="t" style="right:717.98px;text-align:right;top:953.30px;font-size:15px;line-height:15px;color:#6D6D6D;letter-spacing:-0.975px;">18 KB</div>
<svg class="b" style="left:500px;top:977px;" width="14" height="18" viewBox="0 0 14 18"><path d="M0.5 0.5H10.5L13.5 3.5V17.5H0.5Z" fill="url(#docg)" stroke="#838383"/><path d="M10.5 0.5V3.5H13.5" fill="#fff" stroke="#838383"/></svg>
<div class="t" style="left:522px;top:980.30px;font-size:15px;line-height:15px;color:#000;letter-spacing:-0.548px;">addons (2017_01_02 11_32_51 UTC).json</div>
<div class="t" style="left:821px;top:980.30px;font-size:15px;line-height:15px;color:#6D6D6D;letter-spacing:-0.549px;">01.01.2017 19:10</div>
<div class="t" style="left:971px;top:980.30px;font-size:15px;line-height:15px;color:#6D6D6D;letter-spacing:-0.303px;">JSON-Datei</div>
<div class="t" style="right:717.98px;text-align:right;top:980.30px;font-size:15px;line-height:15px;color:#6D6D6D;letter-spacing:-0.975px;">18 KB</div>
<div class="b" style="left:472px;top:218px;width:1428px;height:32px;background:#fff"></div>
<div class="b" style="left:813px;top:218px;width:1px;height:32px;background:#E5E5E5"></div>
<div class="b" style="left:963px;top:218px;width:1px;height:32px;background:#E5E5E5"></div>
<div class="b" style="left:1113px;top:218px;width:1px;height:32px;background:#E5E5E5"></div>
<div class="b" style="left:1213px;top:218px;width:1px;height:32px;background:#E5E5E5"></div>
<div class="t" style="left:496px;top:227.30px;font-size:15px;line-height:15px;color:#4C607A;letter-spacing:-0.254px;">Name</div>
<div class="t" style="left:821px;top:227.30px;font-size:15px;line-height:15px;color:#4C607A;letter-spacing:-0.054px;">Änderungsdatum</div>
<div class="t" style="left:971px;top:227.30px;font-size:15px;line-height:15px;color:#4C607A;letter-spacing:-0.062px;">Typ</div>
<div class="t" style="left:1121px;top:227.30px;font-size:15px;line-height:15px;color:#4C607A;letter-spacing:-0.503px;">Größe</div>
<svg class="b" style="left:645px;top:219px;" width="11" height="6" viewBox="0 0 11 6"><path d="M1.4 4.6L5.5 0.5L9.6 4.6" fill="none" stroke="#3C3C3C" stroke-width="1"/></svg>
<div class="b" style="left:1900px;top:218px;width:20px;height:783px;background:#F0F0F0"></div>
<div class="b" style="left:1900px;top:249px;width:19px;height:21px;background:#CDCDCD"></div>
<svg class="b" style="left:1905px;top:225px;" width="11" height="7" viewBox="0 0 11 7"><path d="M0.8 6.2L5.5 1.5L10.2 6.2" fill="none" stroke="#606060" stroke-width="1.8"/></svg>
<svg class="b" style="left:1904px;top:987px;" width="11" height="7" viewBox="0 0 11 7"><path d="M0.8 0.8L5.5 5.5L10.2 0.8" fill="none" stroke="#606060" stroke-width="1.8"/></svg>
<div class="b" style="left:0px;top:1001px;width:1920px;height:29px;background:#fff"></div>
<div class="t" style="left:17px;top:1008.30px;font-size:15px;line-height:15px;color:#1E1E1E;letter-spacing:-0.256px;">2 275 Elemente</div>
<div class="b" style="left:131px;top:1010px;width:1px;height:12px;background:#E5E5E5"></div>
<div class="t" style="left:145px;top:1008.30px;font-size:15px;line-height:15px;color:#1E1E1E;letter-spacing:-0.304px;">1 Element ausgewählt (17,2 KB)</div>
<div class="b" style="left:365px;top:1010px;width:1px;height:12px;background:#E5E5E5"></div>
<div class="b" style="left:1859px;top:1001px;width:28px;height:29px;background:#CCE8FF;border:1px solid #26A0DA;box-sizing:border-box"></div>
<svg class="b" style="left:1865px;top:1008px;" width="18" height="17" viewBox="0 0 18 17"><rect x="0.5" y="0.5" width="5" height="15" fill="#fff" stroke="#8A8A8A"/><rect x="2" y="2.5" width="2" height="2" fill="#3A8DDE"/><rect x="2" y="7" width="2" height="2" fill="#E0A030"/><rect x="2" y="11.5" width="2" height="2" fill="#D02020"/><path d="M7 3H10.5M11.5 3H15M7 8H10.5M11.5 8H15M7 13H10.5M11.5 13H15" stroke="#7A7A7A" stroke-width="1"/></svg>
<svg class="b" style="left:1892px;top:1008px;" width="18" height="14" viewBox="0 0 18 14"><rect x="0.5" y="0.5" width="17" height="13" fill="#fff" stroke="#8A8A8A"/><rect x="2" y="2" width="14" height="10" fill="#4A8FD8"/><path d="M2 8Q6 5 9 8T16 9V12H2Z" fill="#3C6E4A"/><path d="M2 2H16V5Q10 3 2 5Z" fill="#9CC8F0"/></svg>
<div class="b" style="left:0px;top:1030px;width:1920px;height:50px;background:linear-gradient(90deg,#0B050A 0%,#0E0409 50%,#130305 100%)"></div>
<div class="b" style="left:509px;top:1030px;width:200px;height:50px;background:#3B3337"></div>
<div class="b" style="left:251px;top:1077px;width:190px;height:3px;background:#76B9ED"></div>
<div class="b" style="left:509px;top:1077px;width:200px;height:3px;background:#76B9ED"></div>
<div class="b" style="left:714px;top:1077px;width:190px;height:3px;background:#76B9ED"></div>
<div class="t" style="left:293px;top:1048.30px;font-size:15px;line-height:15px;color:#fff;letter-spacing:-0.390px;">PC kaputt - neuer L...</div>
<div class="t" style="left:556px;top:1048.30px;font-size:15px;line-height:15px;color:#fff;letter-spacing:-0.006px;">kxut94o7.default</div>
<div class="t" style="left:756px;top:1048.30px;font-size:15px;line-height:15px;color:#fff;letter-spacing:-0.490px;">Screenshots</div>
<div class="t" style="left:1731px;top:1048.65px;font-size:14px;line-height:14px;color:#fff;letter-spacing:-0.354px;">DEU</div>
<div class="t" style="left:1510.5px;width:600px;text-align:center;top:1037.15px;font-size:14px;line-height:14px;color:#fff;">21:08</div>
<div class="t" style="left:1510.5px;width:600px;text-align:center;top:1059.65px;font-size:14px;line-height:14px;color:#fff;">04.03.2017</div>
<svg class="b" style="left:20px;top:1045px;" width="21" height="21" viewBox="0 0 21 21"><path d="M0 2.2L8.2 1.1V9.6H0Z M9.1 1L20.2 0V9.6H9.1Z M0 10.5H8.2V19L0 17.9Z M9.1 10.5H20.2V20.1L9.1 19.1Z" fill="#fff"/></svg>
<svg class="b" style="left:79px;top:1044px;" width="22" height="22" viewBox="0 0 22 22"><circle cx="14" cy="8" r="6.8" fill="none" stroke="#fff" stroke-width="1.3"/><path d="M9.2 12.8L1.2 20.8" stroke="#fff" stroke-width="1.4"/></svg>
<svg class="b" style="left:137px;top:1045px;" width="26" height="20" viewBox="0 0 26 20"><rect x="5.2" y="1.2" width="15.6" height="17.3" fill="none" stroke="#fff" stroke-width="1.3"/><path d="M3 4.2H1.3V15.5H3M23 4.2H24.7V15.5H23" fill="none" stroke="#fff" stroke-width="1.2"/></svg>
<svg class="b" style="left:201px;top:1042px;" width="26" height="27" viewBox="0 0 26 27"><path d="M2 12.5C3.5 5 9 1 15 1C22 1 25.5 6.5 25.5 13.5V16H8.5C8.8 20.5 12.5 23 17 23C20 23 22.5 22 24.5 20.8V25.2C22.3 26.3 19.5 27 16.2 27C8 27 3.2 21.8 3.2 15.3C3.2 11.5 5 8.5 8 6.5C5.5 8.2 3.8 10.3 2 12.5Z M8.8 12H19.2C19.2 8.8 17 6.5 14.2 6.5C11.3 6.5 9.3 8.8 8.8 12Z" fill="#1A84DE" fill-rule="evenodd"/></svg>
<svg class="b" style="left:259px;top:1039px;" width="30" height="30" viewBox="0 0 30 30"><defs><linearGradient id="ieg" x1="0" y1="0" x2="0" y2="1"><stop offset="0" stop-color="#8ADAF8"/><stop offset="1" stop-color="#1B8BD8"/></linearGradient></defs><path d="M3 16C3 9 8.5 4 15.5 4C22.5 4 28 9 28 16V18H10C10.5 21.5 13 23.5 16.5 23.5C19.5 23.5 22 22.5 24 21L27.5 25C24.5 27.5 20.5 28.5 16 28.5C8.5 28.5 3 23 3 16Z M10 12.5H21.5C21 9.8 18.8 8.2 15.8 8.2C12.8 8.2 10.6 9.8 10 12.5Z" fill="url(#ieg)" fill-rule="evenodd"/><path d="M5.5 27.5C0.5 30 -1 26.5 3.5 19.5C8 12.5 18 3.5 25 1.5C29.5 0.5 30.5 3 28 7.5" fill="none" stroke="#F4C61E" stroke-width="2.2"/></svg>
<svg class="b" style="left:462px;top:1039px;" width="30" height="31" viewBox="0 0 30 31"><defs><linearGradient id="tbg" x1="0" y1="0" x2="1" y2="1"><stop offset="0" stop-color="#6DB8F2"/><stop offset="0.45" stop-color="#3384DA"/><stop offset="1" stop-color="#1A4FA8"/></linearGradient></defs><circle cx="15" cy="15.5" r="14" fill="url(#tbg)"/><path d="M0 23L6 25L14 29.5L13 31H0Z" fill="#0C0509"/><path d="M5 11Q9 7.5 14 9L19 13L20 15V10Q16 6 11 7Q7 8 5 11Z" fill="#123E8A" opacity="0.6"/><path d="M2.5 15.5L10.5 12L20 14.5L19.5 26.5L12 28.5L2.5 23Z" fill="#ECEAE5"/><path d="M2.5 15.5L10.5 20.5L20 14.5" fill="none" stroke="#8E8A84" stroke-width="0.9"/><circle cx="10" cy="9.5" r="0.9" fill="#D06030"/></svg>
<svg class="b" style="left:526px;top:1042px;" width="19" height="26" viewBox="0 0 19 26"><path d="M5 0H18V21.5H5Z" fill="#F7D47A"/><path d="M18 0V21.5" stroke="#E7BE57" stroke-width="0.8"/><path d="M0 1L6.5 3.5V26L0 23.5Z" fill="#FCE9AE"/><path d="M6.5 3.5V26" stroke="#E9C462" stroke-width="0.7"/></svg>
<svg class="b" style="left:726px;top:1042px;" width="19" height="26" viewBox="0 0 19 26"><path d="M5 0H18V21.5H5Z" fill="#F7D47A"/><path d="M18 0V21.5" stroke="#E7BE57" stroke-width="0.8"/><path d="M0 1L6.5 3.5V26L0 23.5Z" fill="#FCE9AE"/><path d="M6.5 3.5V26" stroke="#E9C462" stroke-width="0.7"/></svg>
<svg class="b" style="left:925px;top:1040px;" width="30" height="30" viewBox="0 0 30 30"><rect x="0" y="0" width="30" height="30" rx="4" fill="#fff"/><rect x="4.5" y="11" width="21" height="5" fill="#C4121B"/><rect x="6" y="17.5" width="18" height="9" fill="#C4121B"/><rect x="13.5" y="11" width="3" height="16" fill="#fff"/><path d="M15 10.5C12 5 7.5 5 8.3 8.5C9 10.5 12 10.5 15 10.5C18 10.5 21 10.5 21.7 8.5C22.5 5 18 5 15 10.5Z" fill="none" stroke="#C4121B" stroke-width="1.6"/></svg>
<svg class="b" style="left:988px;top:1040px;" width="28" height="30" viewBox="0 0 28 30"><path d="M0.5 7.5L27 10V29.5L0.5 26.5Z" fill="#fff"/><path d="M8 9V5C8 1 12 -0.5 15 1.5C18 3.5 17 6.5 17 9.5M11 8.5V4.5C11 1.5 14.5 1 16.5 2.5" fill="none" stroke="#fff" stroke-width="1.6"/><path d="M4.5 14.2L12.5 14.8V19.2H4.5Z M13.8 14.9L22 15.5V19.3H13.8Z M4.5 20.3H12.5V24.8L4.5 24.2Z M13.8 20.3H22V25.5L13.8 24.9Z" fill="#110409"/></svg>
<svg class="b" style="left:1053px;top:1040px;" width="22" height="30" viewBox="0 0 22 30"><rect x="0" y="0" width="22" height="30" fill="#fff"/><rect x="2.5" y="2.5" width="17" height="5" fill="#110409"/><path d="M3.5 12.0H6.5L3.5 14.8Z" fill="#110409"/><path d="M9.5 12.0H12.5L9.5 14.8Z" fill="#110409"/><path d="M15.5 12.0H18.5L15.5 14.8Z" fill="#110409"/><path d="M3.5 17.2H6.5L3.5 20.0Z" fill="#110409"/><path d="M9.5 17.2H12.5L9.5 20.0Z" fill="#110409"/><path d="M15.5 17.2H18.5L15.5 20.0Z" fill="#110409"/><path d="M3.5 22.4H6.5L3.5 25.200000000000003Z" fill="#110409"/><path d="M9.5 22.4H12.5L9.5 25.200000000000003Z" fill="#110409"/><path d="M15.5 22.4H18.5L15.5 25.200000000000003Z" fill="#110409"/></svg>
<svg class="b" style="left:1610px;top:1050px;" width="17" height="9" viewBox="0 0 17 9"><path d="M0.8 8.5L8.5 0.9L16.2 8.5" fill="none" stroke="#fff" stroke-width="1.2"/></svg>
<svg class="b" style="left:1637px;top:1047px;" width="22" height="15" viewBox="0 0 22 15"><rect x="4" y="3.7" width="15.5" height="10" fill="none" stroke="#fff" stroke-width="1.2"/><rect x="6" y="5.7" width="11.5" height="6" fill="#fff"/><rect x="19.5" y="6.7" width="1.8" height="4" fill="#fff"/><path d="M2.5 1V4M5 1V4M1.3 4H6.2V6.5Q6.2 8 3.75 8Q1.3 8 1.3 6.5Z M3.75 8V14" fill="none" stroke="#fff" stroke-width="1.1"/></svg>
<svg class="b" style="left:1670px;top:1047px;" width="17" height="17" viewBox="0 0 17 17"><path d="M1 15A13.5 13.5 0 0 1 15 1.2M4 15A10.5 10.5 0 0 1 15 4.2M7 15A7.5 7.5 0 0 1 15 7.2M10 15A4.5 4.5 0 0 1 15 10.2" fill="none" stroke="#fff" stroke-width="1.1"/><circle cx="14.6" cy="14.5" r="1.4" fill="#fff"/></svg>
<svg class="b" style="left:1697px;top:1045px;" width="22" height="19" viewBox="0 0 22 19"><path d="M1 6.5H4.5L9.5 2V16.5L4.5 12H1Z" fill="none" stroke="#fff" stroke-width="1.2"/><path d="M12.3 7Q13.5 9.2 12.3 11.5M15 4.5Q17.5 9.2 15 14" fill="none" stroke="#fff" stroke-width="1.2"/><path d="M18.2 1.5Q22 9.2 18.2 17.5" fill="none" stroke="#aaa" stroke-width="1.1"/></svg>
<svg class="b" style="left:1868px;top:1044px;" width="30" height="32" viewBox="0 0 30 32"><path d="M1 1H21V17.5H8L4 21.5V17.5H1Z" fill="#fff"/><path d="M5 5.5H17M5 9.5H17M5 13.5H17" stroke="#2B2B2B" stroke-width="1.1"/><circle cx="20.8" cy="20.3" r="9.5" fill="#2E2A2C" stroke="#777" stroke-width="1"/></svg>
<div class="t" style="left:1589px;width:600px;text-align:center;top:1058.15px;font-size:14px;line-height:14px;color:#fff;">1</div>
<div class="b" style="left:1913px;top:1030px;width:1px;height:50px;background:#5A5658"></div>
</body></html>
